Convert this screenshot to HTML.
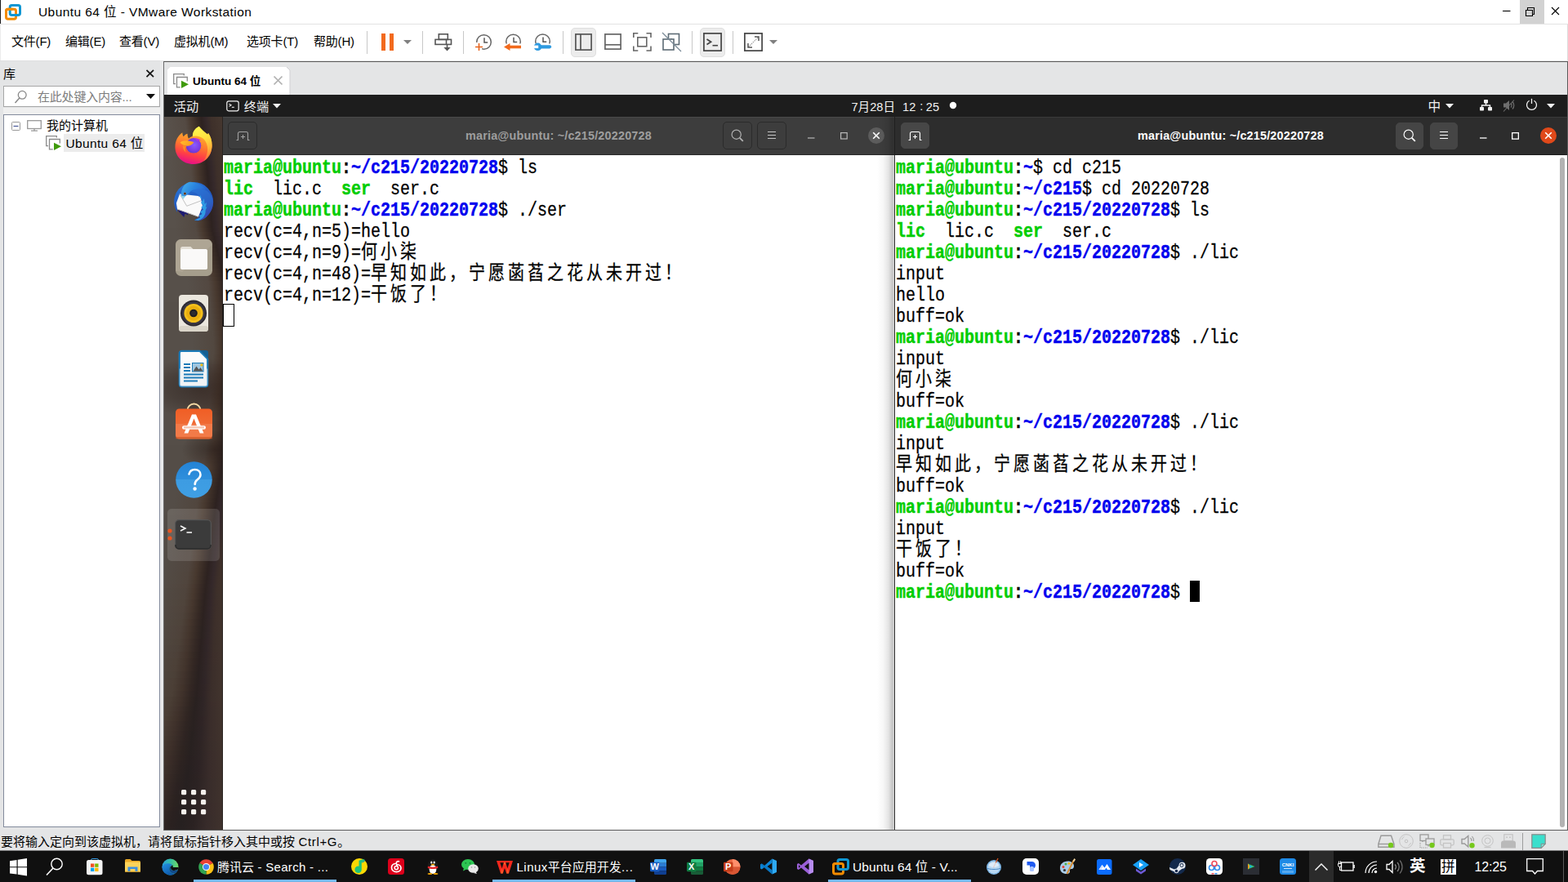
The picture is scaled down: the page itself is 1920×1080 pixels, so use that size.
<!DOCTYPE html>
<html lang="zh"><head><meta charset="utf-8"><title>Ubuntu 64 - VMware Workstation</title><style>
*{box-sizing:border-box}
html,body{margin:0;padding:0}
body{width:1920px;height:1080px;overflow:hidden;background:#fff;position:relative;font-family:"Liberation Sans","Noto Sans CJK SC",sans-serif;color:#000}
body div,body>svg,.abs{position:absolute}
.t{white-space:nowrap}
.m{font-family:"Liberation Mono",monospace}
svg{overflow:visible}

.term{font:20px/22.2222px "Liberation Mono","Noto Sans CJK SC",monospace;white-space:pre;color:#000}
.term p{margin:0;transform:scaleY(1.17);transform-origin:0 0;height:22.2222px;position:absolute;left:0}
.term{-webkit-text-stroke:0.22px currentColor}.term b{-webkit-text-stroke:0.4px currentColor}
.term b.g{color:#00cd00}.term b.b{color:#0000ee}
.k{font-family:"Liberation Mono","Noto Sans CJK SC",monospace;letter-spacing:4px}
</style></head><body>
<div style="left:0px;top:0px;width:1920px;height:29px;background:#fff"></div>
<div style="left:0px;top:0px;width:1px;height:29px;background:#1a1a1a"></div>
<div style="left:0px;top:29px;width:1920px;height:1px;background:#e3e3e3"></div>
<svg style="left:5px;top:4px;" width="22" height="22" viewBox="0 0 22 22"><rect x="2.5" y="7.2" width="12" height="12" rx="2.200" fill="none" stroke="#f38b00" stroke-width="3"/><rect x="7.2" y="2.5" width="12.300" height="12" rx="2.200" fill="none" stroke="#0f96d2" stroke-width="3"/><path d="M2.500 13V9.400A2.200 2.200 0 0 1 4.700 7.200H10.800" fill="none" stroke="#f38b00" stroke-width="3"/></svg>
<div class="t" style="left:47px;top:3.85px;font-size:15.5px;line-height:1.4em;letter-spacing:0.42px">Ubuntu 64 位 - VMware Workstation</div>
<div style="left:1861px;top:0px;width:30px;height:29px;background:#d2d2d2"></div>
<svg style="left:1836px;top:4px;" width="80" height="22" viewBox="0 0 80 22"><path d="M4 9.500h9.500" stroke="#000" stroke-width="1.100" fill="none"/><path d="M34.500 5.500h8v8h-8z" fill="none" stroke="#000" stroke-width="1.100"/><path d="M32.500 8.500h8v7h-8z" fill="#d2d2d2" stroke="#000" stroke-width="1.100"/><path d="M64 5l9 9M73 5l-9 9" stroke="#000" stroke-width="1.100" fill="none"/></svg>
<div style="left:0px;top:30px;width:1920px;height:44px;background:#fff"></div>
<div style="left:0px;top:30px;width:1px;height:44px;background:#ececec"></div>
<div style="left:1919px;top:30px;width:1px;height:44px;background:#dcdcdc"></div>
<div class="t" style="left:14px;top:40.20px;font-size:15px;line-height:1.4em;letter-spacing:-0.2px">文件(F)</div>
<div class="t" style="left:80px;top:40.20px;font-size:15px;line-height:1.4em;letter-spacing:-0.2px">编辑(E)</div>
<div class="t" style="left:146px;top:40.20px;font-size:15px;line-height:1.4em;letter-spacing:-0.2px">查看(V)</div>
<div class="t" style="left:213px;top:40.20px;font-size:15px;line-height:1.4em;letter-spacing:-0.2px">虚拟机(M)</div>
<div class="t" style="left:302px;top:40.20px;font-size:15px;line-height:1.4em;letter-spacing:-0.2px">选项卡(T)</div>
<div class="t" style="left:384px;top:40.20px;font-size:15px;line-height:1.4em;letter-spacing:-0.2px">帮助(H)</div>
<div style="left:466.5px;top:41px;width:5.3px;height:21px;background:#f26a1d"></div>
<div style="left:477px;top:41px;width:5.3px;height:21px;background:#f26a1d"></div>
<div style="left:449px;top:38px;width:1px;height:28px;background:#c8c8c8"></div>
<svg style="left:494px;top:49.3px;" width="10" height="5" viewBox="0 0 10 5"><path d="M0 0h10l-5 5z" fill="#808080"/></svg>
<div style="left:517px;top:38px;width:1px;height:28px;background:#c8c8c8"></div>
<svg style="left:531px;top:40px;" width="24" height="24" viewBox="0 0 24 24"><g fill="none" stroke="#555" stroke-width="1.600"><rect x="6.3" y="1.8" width="11" height="6.600"/><rect x="2" y="8.4" width="19.500" height="6"/><path d="M15.500 8.400v6"/><path d="M16.500 14.500v6"/></g><path d="M12.300 18h8.400l-4.200 4.400z" fill="#555"/></svg>
<div style="left:567px;top:38px;width:1px;height:28px;background:#c8c8c8"></div>
<svg style="left:581px;top:40px;" width="24" height="24" viewBox="0 0 24 24"><circle cx="11.500" cy="11.500" r="8.800" fill="none" stroke="#666" stroke-width="1.500"/><path d="M12 6.300v5.700h4.200" fill="none" stroke="#555" stroke-width="1.500"/><rect x="0" y="12" width="9" height="12" fill="#fff"/><path d="M1 17.500h9M5.500 13v9" stroke="#e8651f" stroke-width="1.600" fill="none"/></svg>
<svg style="left:616px;top:40px;" width="24" height="24" viewBox="0 0 24 24"><circle cx="12.500" cy="11" r="8.800" fill="none" stroke="#666" stroke-width="1.500"/><path d="M13 5.800v5.700h4.200" fill="none" stroke="#555" stroke-width="1.500"/><rect x="0" y="13.5" width="24" height="10" fill="#fff"/><path d="M7 17.500h15" stroke="#f26a1d" stroke-width="3.600" fill="none"/><path d="M1 17.500l7.500-4.600v9.200z" fill="#f26a1d"/></svg>
<svg style="left:652px;top:40px;" width="24" height="24" viewBox="0 0 24 24"><circle cx="12.500" cy="10.800" r="8.800" fill="none" stroke="#666" stroke-width="1.500"/><path d="M13 5.600v5.700h4.200" fill="none" stroke="#555" stroke-width="1.500"/><rect x="0" y="13.5" width="24" height="10" fill="#fff"/><path d="M10.500 17.300h10.500" stroke="#2e9ae0" stroke-width="4.200" stroke-linecap="round" fill="none"/><circle cx="6.500" cy="17.300" r="4.800" fill="#2e9ae0"/><rect x="0" y="15.6" width="7.200" height="3.500" fill="#fff"/></svg>
<div style="left:689px;top:38px;width:1px;height:28px;background:#c8c8c8"></div>
<div style="left:699px;top:34px;width:31px;height:36px;background:#ececec;border:1px solid #dedede;border-radius:5px"></div>
<svg style="left:703px;top:40px;" width="24" height="24" viewBox="0 0 24 24"><g fill="none" stroke="#555" stroke-width="1.700"><rect x="1.9" y="1.9" width="19.200" height="19.200"/><path d="M8 2v19"/></g></svg>
<svg style="left:739px;top:40px;" width="24" height="24" viewBox="0 0 24 24"><g fill="none" stroke="#666" stroke-width="1.700"><rect x="1.9" y="1.9" width="19.200" height="18.200"/><path d="M2 14.800h19"/></g></svg>
<svg style="left:774px;top:39px;" width="25" height="25" viewBox="0 0 25 25"><g fill="none" stroke="#666" stroke-width="1.600"><rect x="6.8" y="6.8" width="11" height="11"/><path d="M1.800 7v-5.200h5.500M17.500 1.800h5.500v5.200M23 17.500v5.500h-5.500M7.300 23h-5.500v-5.500"/></g></svg>
<svg style="left:810px;top:39px;" width="25" height="25" viewBox="0 0 25 25"><g fill="none" stroke-width="1.600"><rect x="8.5" y="2.5" width="13" height="13" stroke="#5d6b75"/><rect x="2" y="9" width="13" height="13" stroke="#5d6b75" fill="#fff"/><path d="M12 9v-1" stroke="#5d6b75"/><path d="M1 1l23 23" stroke="#7a8a96" stroke-width="1.300"/></g></svg>
<div style="left:847px;top:38px;width:1px;height:28px;background:#c8c8c8"></div>
<div style="left:857px;top:34px;width:31px;height:36px;background:#ececec;border:1px solid #dedede;border-radius:5px"></div>
<svg style="left:860px;top:39px;" width="25" height="25" viewBox="0 0 25 25"><rect x="1.9" y="1.9" width="21.200" height="21.200" fill="#ededed" stroke="#444" stroke-width="1.700"/><path d="M5.500 9l5 3.200-5 3.200" fill="none" stroke="#444" stroke-width="1.800"/><path d="M12.500 16.700h6.500" stroke="#444" stroke-width="1.600"/></svg>
<div style="left:897px;top:38px;width:1px;height:28px;background:#c8c8c8"></div>
<svg style="left:910px;top:39px;" width="25" height="25" viewBox="0 0 25 25"><rect x="1.9" y="1.9" width="21.200" height="21.200" fill="none" stroke="#444" stroke-width="1.700"/><path d="M6.500 18.500l12-12" stroke="#999" stroke-width="1.200" stroke-dasharray="1.500 1"/><path d="M14 6h5v5M11 19h-5v-5" fill="none" stroke="#555" stroke-width="1.500"/></svg>
<svg style="left:942px;top:49.3px;" width="10" height="5" viewBox="0 0 10 5"><path d="M0 0h10l-5 5z" fill="#808080"/></svg>
<div style="left:0px;top:74px;width:1920px;height:943px;background:#e4e5e6"></div>
<div style="left:0px;top:74px;width:200px;height:1px;background:#dfdfe0"></div>
<div style="left:196px;top:74px;width:4px;height:943px;background:#e8e9ea"></div>
<div class="t" style="left:4px;top:79.70px;font-size:15px;line-height:1.4em;">库</div>
<svg style="left:178px;top:84px;" width="12" height="12" viewBox="0 0 12 12"><path d="M1.500 1.800l8.500 8.400M10 1.800l-8.500 8.400" stroke="#111" stroke-width="1.700" fill="none"/></svg>
<div style="left:4px;top:105px;width:192px;height:26px;background:#fff;border:1px solid #a6a6a6"></div>
<svg style="left:16px;top:109px;" width="20" height="20" viewBox="0 0 20 20"><circle cx="11.200" cy="7.300" r="4.900" fill="none" stroke="#888" stroke-width="1.300"/><path d="M7.800 11l-5.300 6" stroke="#888" stroke-width="1.500"/></svg>
<div class="t" style="left:46px;top:107.70px;font-size:15px;line-height:1.4em;color:#7d7d7d;letter-spacing:-0.2px">在此处键入内容...</div>
<svg style="left:179px;top:115px;" width="11" height="6" viewBox="0 0 11 6"><path d="M0 0h11l-5.500 6z" fill="#111"/></svg>
<div style="left:4px;top:132px;width:192px;height:8px;background:#efefef"></div>
<div style="left:4px;top:140px;width:192px;height:873px;background:#fff;border:1px solid #828a9c"></div>
<svg style="left:14px;top:149px;" width="11" height="11" viewBox="0 0 11 11"><rect x="0.5" y="0.5" width="10" height="10" rx="1" fill="#fafafa" stroke="#9a9a9a"/><path d="M2.500 5.500h6" stroke="#4a5a9a" stroke-width="1.200"/></svg>
<svg style="left:33px;top:147px;" width="18" height="14" viewBox="0 0 18 14"><rect x="0.7" y="0.7" width="16.600" height="9.800" fill="#fff" stroke="#999" stroke-width="1.300"/><path d="M9 10.500v2.500M5 13.200h8" stroke="#999" stroke-width="1.300"/></svg>
<div class="t" style="left:57px;top:142.70px;font-size:15px;line-height:1.4em;">我的计算机</div>
<svg style="left:56px;top:166px;" width="19" height="19" viewBox="0 0 19 19"><path d="M13.300 2.500v-1.800h-12.600v12h2.300" fill="none" stroke="#8a8a8a" stroke-width="1.300"/><path d="M17.300 9.500v-5h-12.800v12.300h4.300" fill="none" stroke="#8a8a8a" stroke-width="1.300"/><path d="M10 8.800l9 4.500-9 4.600z" fill="#3f9a0b"/></svg>
<div style="left:78px;top:164px;width:99px;height:22px;background:#ececec"></div>
<div class="t" style="left:80.5px;top:164.85px;font-size:15.5px;line-height:1.4em;letter-spacing:0.35px">Ubuntu 64 位</div>
<div style="left:200px;top:75px;width:1720px;height:1px;background:#5a5a5a"></div>
<div style="left:200px;top:75px;width:1px;height:942px;background:#6c6c6c"></div>
<div style="left:1919px;top:75px;width:1px;height:942px;background:#5a5a5a"></div>
<div style="left:201px;top:1016px;width:1719px;height:1px;background:#5a5a5a"></div>
<svg style="left:205px;top:82px;" width="150" height="34" viewBox="0 0 150 34"><path d="M0 34V3.500L3.500 0H146l4 4v30z" fill="#fff"/><path d="M146 0l4 4v30" fill="none" stroke="#d0d0d3" stroke-width="1"/></svg>
<svg style="left:212px;top:90px;" width="19" height="19" viewBox="0 0 19 19"><path d="M13.300 2.500v-1.800h-12.600v12h2.300" fill="none" stroke="#8a8a8a" stroke-width="1.300"/><path d="M17.300 9.500v-5h-12.800v12.300h4.300" fill="none" stroke="#8a8a8a" stroke-width="1.300"/><path d="M10 8.800l9 4.500-9 4.600z" fill="#3f9a0b"/></svg>
<div class="t" style="left:236px;top:90.75px;font-size:13.5px;line-height:1.4em;font-weight:bold;letter-spacing:0px">Ubuntu 64 位</div>
<svg style="left:334px;top:92px;" width="13" height="13" viewBox="0 0 13 13"><path d="M1.500 1.500l10 10M11.500 1.500l-10 10" stroke="#b0b0b0" stroke-width="1.700" fill="none"/></svg>
<div style="left:201px;top:116px;width:1718px;height:27px;background:#1d1d1d"></div>
<div class="t" style="left:212.7px;top:120.46px;font-size:15.2px;line-height:1.4em;color:#f2f2f2">活动</div>
<svg style="left:277px;top:122.5px;" width="16" height="14" viewBox="0 0 16 14"><rect x="0.8" y="0.8" width="14.400" height="12" rx="2.200" fill="none" stroke="#f2f2f2" stroke-width="1.200"/><path d="M3.500 4.200l2.600 1.600-2.600 1.600" fill="none" stroke="#f2f2f2" stroke-width="1.100"/><path d="M6.800 8.300h3" stroke="#f2f2f2" stroke-width="1.100"/></svg>
<div class="t" style="left:298.7px;top:120.46px;font-size:15.2px;line-height:1.4em;color:#f2f2f2">终端</div>
<svg style="left:334px;top:127px;" width="10" height="5.5" viewBox="0 0 10 5.5"><path d="M0 0h10l-5 5.500z" fill="#f2f2f2"/></svg>
<div class="t" style="left:1042.5px;top:121.28px;font-size:14.6px;line-height:1.4em;color:#f2f2f2">7月28日<span style="margin-left:9px">12</span><span style="margin:0 3.5px 0 5px;position:relative;top:-1px">:</span>25</div>
<svg style="left:1162px;top:124px;" width="10" height="10" viewBox="0 0 10 10"><circle cx="5" cy="5" r="4.200" fill="#fff"/></svg>
<div class="t" style="left:1748.6px;top:120.38px;font-size:15.6px;line-height:1.4em;color:#f2f2f2">中</div>
<svg style="left:1770px;top:127px;" width="10" height="5.5" viewBox="0 0 10 5.5"><path d="M0 0h10l-5 5.500z" fill="#f2f2f2"/></svg>
<svg style="left:1812px;top:122px;" width="15" height="14" viewBox="0 0 15 14"><g fill="#f2f2f2"><rect x="5" y="0" width="5" height="4.600" rx="0.800"/><rect x="0" y="9" width="5" height="4.600" rx="0.800"/><rect x="10" y="9" width="5" height="4.600" rx="0.800"/></g><path d="M7.500 4v3M2.500 9.500v-2.500h10v2.500" fill="none" stroke="#f2f2f2" stroke-width="1.400"/></svg>
<svg style="left:1840px;top:121px;" width="16" height="16" viewBox="0 0 16 16"><path d="M1 5.500h3l4-3.500v12l-4-3.500h-3z" fill="#6e6e6e"/><path d="M10 5.500a3.500 3.500 0 0 1 0 5M12 3.500a6.500 6.500 0 0 1 0 9" fill="none" stroke="#6e6e6e" stroke-width="1.200"/><path d="M1 15.500l13-14" stroke="#6e6e6e" stroke-width="1.100"/></svg>
<svg style="left:1868px;top:120.3px;" width="15" height="15" viewBox="0 0 15 15"><path d="M4.600 3.200a6 6 0 1 0 5.800 0" fill="none" stroke="#f2f2f2" stroke-width="1.300"/><path d="M7.500 0.800v6.200" stroke="#f2f2f2" stroke-width="1.300"/></svg>
<svg style="left:1894px;top:127px;" width="10" height="5.5" viewBox="0 0 10 5.5"><path d="M0 0h10l-5 5.500z" fill="#f2f2f2"/></svg>
<div style="left:201px;top:143px;width:72px;height:5px;background:linear-gradient(90deg,#59524c 0.3px,#544a43 25.3px,#48392f 33.3px,#382b25 40.3px,#2d2220 45.3px,#34282a 51.3px,#3e302a 57.3px,#45372f 70.3px)"></div>
<div style="left:201px;top:148px;width:72px;height:5px;background:linear-gradient(90deg,#59524c 1.0px,#544a43 26.0px,#48392f 34.0px,#382b25 41.0px,#2d2220 46.0px,#34282a 52.0px,#3e302a 58.0px,#45372f 71.0px)"></div>
<div style="left:201px;top:153px;width:72px;height:5px;background:linear-gradient(90deg,#59524c 1.6px,#544a43 26.6px,#48392f 34.6px,#382b25 41.6px,#2d2220 46.6px,#34282a 52.6px,#3e302a 58.6px,#45372f 71.6px)"></div>
<div style="left:201px;top:158px;width:72px;height:6px;background:linear-gradient(90deg,#59524c 2.2px,#544a43 27.2px,#48392f 35.2px,#382b25 42.2px,#2d2220 47.2px,#34282a 53.2px,#3e302a 59.2px,#45372f 72.2px)"></div>
<div style="left:201px;top:164px;width:72px;height:5px;background:linear-gradient(90deg,#59524c 2.9px,#544a43 27.9px,#48392f 35.9px,#382b25 42.9px,#2d2220 47.9px,#34282a 53.9px,#3e302a 59.9px,#45372f 72.9px)"></div>
<div style="left:201px;top:169px;width:72px;height:6px;background:linear-gradient(90deg,#59524c 3.4px,#544a43 28.4px,#48392f 36.4px,#382b25 43.4px,#2d2220 48.4px,#34282a 54.4px,#3e302a 60.4px,#45372f 73.4px)"></div>
<div style="left:201px;top:175px;width:72px;height:5px;background:linear-gradient(90deg,#59524c 4.2px,#544a43 29.2px,#48392f 37.2px,#382b25 44.2px,#2d2220 49.2px,#34282a 55.2px,#3e302a 61.2px,#45372f 74.2px)"></div>
<div style="left:201px;top:180px;width:72px;height:6px;background:linear-gradient(90deg,#59524c 4.7px,#544a43 29.7px,#48392f 37.7px,#382b25 44.7px,#2d2220 49.7px,#34282a 55.7px,#3e302a 61.7px,#45372f 74.7px)"></div>
<div style="left:201px;top:186px;width:72px;height:5px;background:linear-gradient(90deg,#59524c 5.4px,#544a43 30.4px,#48392f 38.4px,#382b25 45.4px,#2d2220 50.4px,#34282a 56.4px,#3e302a 62.4px,#45372f 75.4px)"></div>
<div style="left:201px;top:191px;width:72px;height:6px;background:linear-gradient(90deg,#58514b 6.0px,#544a43 31.0px,#48392f 39.0px,#382b25 46.0px,#2d2220 51.0px,#34282a 57.0px,#3e302a 63.0px,#45372f 76.0px)"></div>
<div style="left:201px;top:197px;width:72px;height:5px;background:linear-gradient(90deg,#58514b 6.7px,#544a42 31.7px,#48392f 39.7px,#382b25 46.7px,#2d2220 51.7px,#34282a 57.7px,#3e302a 63.7px,#45372f 76.7px)"></div>
<div style="left:201px;top:202px;width:72px;height:6px;background:linear-gradient(90deg,#58514b 7.3px,#544942 32.3px,#48392f 40.3px,#382b25 47.3px,#2d2220 52.3px,#34282a 58.3px,#3e302a 64.3px,#45372f 77.3px)"></div>
<div style="left:201px;top:208px;width:72px;height:7px;background:linear-gradient(90deg,#58514b 8.0px,#544942 33.0px,#48392f 41.0px,#382b25 48.0px,#2d2220 53.0px,#34282a 59.0px,#3e302a 65.0px,#45372f 78.0px)"></div>
<div style="left:201px;top:215px;width:72px;height:8px;background:linear-gradient(90deg,#58514b 8.6px,#534942 33.6px,#48392f 41.6px,#382b25 48.6px,#2d2220 53.6px,#34282a 59.6px,#3e302a 65.6px,#45372f 78.6px)"></div>
<div style="left:201px;top:223px;width:72px;height:8px;background:linear-gradient(90deg,#58514b 9.2px,#534942 34.2px,#48392f 42.2px,#382b25 49.2px,#2d2220 54.2px,#34282a 60.2px,#3e302a 66.2px,#45372f 79.2px)"></div>
<div style="left:201px;top:231px;width:72px;height:8px;background:linear-gradient(90deg,#58514b 9.9px,#534942 34.9px,#48392f 42.9px,#382b25 49.9px,#2d2220 54.9px,#34282a 60.9px,#3e302a 66.9px,#45372f 79.9px)"></div>
<div style="left:201px;top:239px;width:72px;height:8px;background:linear-gradient(90deg,#58514b 10.6px,#534942 35.6px,#48392f 43.6px,#382b25 50.6px,#2d2220 55.6px,#34282a 61.6px,#3e302a 67.6px,#45372f 80.6px)"></div>
<div style="left:201px;top:247px;width:72px;height:8px;background:linear-gradient(90deg,#58514b 11.2px,#534942 36.2px,#48392f 44.2px,#382b25 51.2px,#2d2220 56.2px,#34282a 62.2px,#3e302a 68.2px,#45372f 81.2px)"></div>
<div style="left:201px;top:255px;width:72px;height:8px;background:linear-gradient(90deg,#58514b 11.9px,#534942 36.9px,#48392f 44.9px,#382b25 51.9px,#2d2220 56.9px,#34282a 62.9px,#3e302a 68.9px,#45372f 81.9px)"></div>
<div style="left:201px;top:263px;width:72px;height:8px;background:linear-gradient(90deg,#58514b 12.6px,#534942 37.6px,#48392f 45.6px,#382b25 52.6px,#2d2220 57.6px,#34282a 63.6px,#3e302a 69.6px,#45372f 82.6px)"></div>
<div style="left:201px;top:271px;width:72px;height:8px;background:linear-gradient(90deg,#58514b 13.2px,#534942 38.2px,#48392f 46.2px,#382b25 53.2px,#2d2220 58.2px,#34282a 64.2px,#3e302a 70.2px,#45372f 83.2px)"></div>
<div style="left:201px;top:279px;width:72px;height:5px;background:linear-gradient(90deg,#57504a 13.9px,#534942 38.9px,#48392f 46.9px,#382b25 53.9px,#2d2220 58.9px,#34282a 64.9px,#3e302a 70.9px,#45372f 83.9px)"></div>
<div style="left:201px;top:284px;width:72px;height:5px;background:linear-gradient(90deg,#57504a 14.9px,#534942 40.0px,#48392f 48.0px,#382b25 55.0px,#2d2220 60.0px,#34282a 66.0px,#3e302a 72.0px,#45372f 85.0px)"></div>
<div style="left:201px;top:289px;width:72px;height:5px;background:linear-gradient(90deg,#57504a 16.1px,#534942 41.2px,#48392f 49.2px,#382b25 56.2px,#2d2220 61.2px,#34282a 67.3px,#3e302a 73.3px,#45372f 86.4px)"></div>
<div style="left:201px;top:294px;width:72px;height:5px;background:linear-gradient(90deg,#57504a 17.2px,#534942 42.4px,#48392f 50.4px,#382b25 57.5px,#2d2220 62.5px,#34282a 68.5px,#3e302a 74.6px,#45372f 87.7px)"></div>
<div style="left:201px;top:299px;width:72px;height:5px;background:linear-gradient(90deg,#57504a 18.4px,#534941 43.6px,#48392f 51.6px,#382b25 58.7px,#2d2220 63.8px,#34282a 69.8px,#3e302a 75.9px,#45372f 89.0px)"></div>
<div style="left:201px;top:304px;width:72px;height:5px;background:linear-gradient(90deg,#57504a 19.5px,#534941 44.8px,#48392f 52.9px,#382b25 59.9px,#2d2220 65.0px,#34282a 71.1px,#3e302a 77.1px,#45372f 90.3px)"></div>
<div style="left:201px;top:309px;width:72px;height:5px;background:linear-gradient(90deg,#57504a 20.7px,#534941 46.0px,#48392f 54.1px,#382b25 61.2px,#2d2220 66.2px,#34282a 72.3px,#3e302a 78.4px,#45372f 91.6px)"></div>
<div style="left:201px;top:314px;width:72px;height:5px;background:linear-gradient(90deg,#57504a 21.8px,#534941 47.2px,#48392f 55.3px,#382b25 62.4px,#2d2220 67.5px,#34282a 73.6px,#3e302a 79.7px,#45372f 92.9px)"></div>
<div style="left:201px;top:319px;width:72px;height:5px;background:linear-gradient(90deg,#57504a 23.0px,#534941 48.4px,#48392f 56.5px,#382b25 63.7px,#2d2220 68.8px,#34282a 74.9px,#3e302a 81.0px,#45372f 94.2px)"></div>
<div style="left:201px;top:324px;width:72px;height:5px;background:linear-gradient(90deg,#57504a 24.1px,#534841 49.6px,#48392f 57.8px,#382b25 64.9px,#2d2220 70.0px,#34282a 76.1px,#3e302a 82.2px,#45372f 95.5px)"></div>
<div style="left:201px;top:329px;width:72px;height:5px;background:linear-gradient(90deg,#57504a 25.3px,#534841 50.8px,#48392f 59.0px,#382b25 66.1px,#2d2220 71.2px,#34282a 77.4px,#3e302a 83.5px,#45372f 96.8px)"></div>
<div style="left:201px;top:334px;width:72px;height:5px;background:linear-gradient(90deg,#57504a 26.4px,#534841 52.0px,#48392f 60.2px,#382b25 67.4px,#2d2220 72.5px,#34282a 78.6px,#3e302a 84.8px,#45372f 98.1px)"></div>
<div style="left:201px;top:339px;width:72px;height:5px;background:linear-gradient(90deg,#57504a 27.6px,#534841 53.2px,#48392f 61.4px,#382b25 68.6px,#2d2220 73.8px,#34282a 79.9px,#3e302a 86.1px,#45372f 99.4px)"></div>
<div style="left:201px;top:344px;width:72px;height:5px;background:linear-gradient(90deg,#57504a 28.7px,#534841 54.4px,#48392f 62.7px,#382b25 69.9px,#2d2220 75.0px,#34282a 81.2px,#3e302a 87.3px,#45372f 100.7px)"></div>
<div style="left:201px;top:349px;width:72px;height:7px;background:linear-gradient(90deg,#57504a 29.1px,#534841 54.9px,#48392f 63.1px,#382b25 70.3px,#2d2220 75.5px,#34282a 81.7px,#3e302a 87.8px,#45372f 101.2px)"></div>
<div style="left:201px;top:356px;width:72px;height:7px;background:linear-gradient(90deg,#57504a 29.6px,#524841 55.5px,#48392f 63.7px,#382b25 71.0px,#2d2220 76.1px,#34282a 82.3px,#3e302a 88.5px,#45372f 102.0px)"></div>
<div style="left:201px;top:363px;width:72px;height:7px;background:linear-gradient(90deg,#57504a 30.1px,#524841 56.0px,#48392f 64.3px,#382b25 71.6px,#2d2220 76.8px,#34282a 83.0px,#3e302a 89.2px,#45372f 102.7px)"></div>
<div style="left:201px;top:370px;width:72px;height:7px;background:linear-gradient(90deg,#564f49 30.6px,#524841 56.6px,#48392f 65.0px,#382b25 72.3px,#2d2220 77.5px,#34282a 83.7px,#3e302a 89.9px,#45372f 103.5px)"></div>
<div style="left:201px;top:377px;width:72px;height:7px;background:linear-gradient(90deg,#564f49 31.2px,#524841 57.2px,#48392f 65.6px,#382b25 72.9px,#2d2220 78.1px,#34282a 84.4px,#3e302a 90.6px,#45372f 104.2px)"></div>
<div style="left:201px;top:384px;width:72px;height:7px;background:linear-gradient(90deg,#564f49 31.7px,#524841 57.8px,#48392f 66.2px,#382b25 73.5px,#2d2220 78.8px,#34282a 85.1px,#3e302a 91.3px,#45372f 105.0px)"></div>
<div style="left:201px;top:391px;width:72px;height:7px;background:linear-gradient(90deg,#564f49 32.2px,#524841 58.4px,#48392f 66.8px,#382b25 74.2px,#2d2220 79.4px,#34282a 85.7px,#3e302a 92.0px,#45372f 105.7px)"></div>
<div style="left:201px;top:398px;width:72px;height:7px;background:linear-gradient(90deg,#564f49 32.7px,#524840 59.0px,#48392f 67.5px,#382b25 74.8px,#2d2220 80.1px,#34282a 86.4px,#3e302a 92.7px,#45372f 106.4px)"></div>
<div style="left:201px;top:405px;width:72px;height:7px;background:linear-gradient(90deg,#564f49 33.2px,#524840 59.6px,#48392f 68.1px,#382b25 75.5px,#2d2220 80.8px,#34282a 87.1px,#3e302a 93.4px,#45372f 107.2px)"></div>
<div style="left:201px;top:412px;width:72px;height:10px;background:linear-gradient(90deg,#564f49 33.8px,#524840 60.2px,#48392f 68.7px,#382b25 76.1px,#2d2220 81.4px,#34282a 87.8px,#3e302a 94.1px,#45372f 107.9px)"></div>
<div style="left:201px;top:422px;width:72px;height:12px;background:linear-gradient(90deg,#564f49 33.9px,#524840 60.5px,#48392f 69.0px,#382b25 76.4px,#2d2220 81.8px,#34282a 88.2px,#3e302a 94.5px,#45372f 108.4px)"></div>
<div style="left:201px;top:434px;width:72px;height:12px;background:linear-gradient(90deg,#564f49 32.9px,#524840 59.7px,#48392f 68.2px,#382b25 75.7px,#2d2220 81.1px,#34282a 87.5px,#3e302a 93.9px,#45372f 107.8px)"></div>
<div style="left:201px;top:446px;width:72px;height:11px;background:linear-gradient(90deg,#564f49 32.0px,#524740 58.9px,#48392f 67.5px,#382b25 75.0px,#2d2220 80.4px,#34282a 86.8px,#3e302a 93.3px,#45372f 107.2px)"></div>
<div style="left:201px;top:457px;width:72px;height:12px;background:linear-gradient(90deg,#554e48 31.1px,#524740 58.1px,#48392f 66.8px,#382b25 74.3px,#2d2220 79.7px,#34282a 86.2px,#3e302a 92.7px,#45372f 106.7px)"></div>
<div style="left:201px;top:469px;width:72px;height:12px;background:linear-gradient(90deg,#554e48 30.2px,#524740 57.3px,#48392f 66.0px,#382b25 73.6px,#2d2220 79.0px,#34282a 85.5px,#3e302a 92.0px,#45372f 106.2px)"></div>
<div style="left:201px;top:481px;width:72px;height:12px;background:linear-gradient(90deg,#554e48 29.3px,#524740 56.5px,#48392f 65.2px,#382b25 72.9px,#2d2220 78.3px,#34282a 84.9px,#3e302a 91.4px,#45372f 105.6px)"></div>
<div style="left:201px;top:493px;width:72px;height:12px;background:linear-gradient(90deg,#554e48 28.3px,#524740 55.7px,#48392f 64.5px,#382b25 72.1px,#2d2220 77.6px,#34282a 84.2px,#3e302a 90.8px,#45372f 105.0px)"></div>
<div style="left:201px;top:505px;width:72px;height:11px;background:linear-gradient(90deg,#554e48 27.4px,#51473f 54.9px,#48392f 63.7px,#382b25 71.4px,#2d2220 76.9px,#34282a 83.5px,#3e302a 90.1px,#45372f 104.5px)"></div>
<div style="left:201px;top:516px;width:72px;height:12px;background:linear-gradient(90deg,#554e48 26.5px,#51473f 54.2px,#48392f 63.0px,#382b25 70.8px,#2d2220 76.3px,#34282a 82.9px,#3e302a 89.6px,#45372f 103.9px)"></div>
<div style="left:201px;top:528px;width:72px;height:12px;background:linear-gradient(90deg,#554e48 25.6px,#51473f 53.3px,#48392f 62.2px,#382b25 70.0px,#2d2220 75.6px,#34282a 82.3px,#3e302a 88.9px,#45372f 103.4px)"></div>
<div style="left:201px;top:540px;width:72px;height:5px;background:linear-gradient(90deg,#554e48 24.4px,#51473f 52.3px,#48392f 61.3px,#382b25 69.1px,#2d2220 74.7px,#34282a 81.4px,#3e302a 88.1px,#45372f 102.6px)"></div>
<div style="left:201px;top:545px;width:72px;height:5px;background:linear-gradient(90deg,#544d47 23.6px,#51473f 51.5px,#48392f 60.5px,#382b25 68.3px,#2d2220 73.9px,#34282a 80.6px,#3e302a 87.4px,#45372f 101.9px)"></div>
<div style="left:201px;top:550px;width:72px;height:5px;background:linear-gradient(90deg,#544d47 22.7px,#51473f 50.7px,#48392f 59.7px,#382b25 67.5px,#2d2220 73.2px,#34282a 79.9px,#3e302a 86.6px,#45372f 101.2px)"></div>
<div style="left:201px;top:555px;width:72px;height:5px;background:linear-gradient(90deg,#544d47 21.8px,#51473f 49.9px,#48392f 58.9px,#382b25 66.8px,#2d2220 72.4px,#34282a 79.1px,#3e302a 85.9px,#45372f 100.5px)"></div>
<div style="left:201px;top:560px;width:72px;height:5px;background:linear-gradient(90deg,#544d47 20.9px,#51463f 49.1px,#48392f 58.1px,#382b25 66.0px,#2d2220 71.6px,#34282a 78.4px,#3e302a 85.1px,#45372f 99.8px)"></div>
<div style="left:201px;top:565px;width:72px;height:5px;background:linear-gradient(90deg,#544d47 20.1px,#51463f 48.3px,#48392f 57.3px,#382b25 65.2px,#2d2220 70.8px,#34282a 77.6px,#3e302a 84.4px,#45372f 99.1px)"></div>
<div style="left:201px;top:570px;width:72px;height:5px;background:linear-gradient(90deg,#544d47 19.2px,#51463f 47.5px,#48392f 56.5px,#382b25 64.4px,#2d2220 70.1px,#34282a 76.9px,#3e302a 83.6px,#45372f 98.3px)"></div>
<div style="left:201px;top:575px;width:72px;height:5px;background:linear-gradient(90deg,#544d47 18.3px,#51463f 46.7px,#48392f 55.7px,#382b25 63.6px,#2d2220 69.3px,#34282a 76.1px,#3e302a 82.9px,#45372f 97.6px)"></div>
<div style="left:201px;top:580px;width:72px;height:5px;background:linear-gradient(90deg,#544d47 17.5px,#51463f 45.8px,#48392f 54.9px,#382b25 62.9px,#2d2220 68.5px,#34282a 75.3px,#3e302a 82.2px,#45372f 96.9px)"></div>
<div style="left:201px;top:585px;width:72px;height:5px;background:linear-gradient(90deg,#544d47 16.6px,#51463f 45.0px,#48392f 54.1px,#382b25 62.1px,#2d2220 67.8px,#34282a 74.6px,#3e302a 81.4px,#45372f 96.2px)"></div>
<div style="left:201px;top:590px;width:72px;height:5px;background:linear-gradient(90deg,#544d47 15.7px,#51463f 44.2px,#48392f 53.3px,#382b25 61.3px,#2d2220 67.0px,#34282a 73.8px,#3e302a 80.7px,#45372f 95.5px)"></div>
<div style="left:201px;top:595px;width:72px;height:5px;background:linear-gradient(90deg,#544d47 14.8px,#51463f 43.4px,#48392f 52.5px,#382b25 60.5px,#2d2220 66.2px,#34282a 73.1px,#3e302a 79.9px,#45372f 94.8px)"></div>
<div style="left:201px;top:600px;width:72px;height:5px;background:linear-gradient(90deg,#544d47 14.0px,#51463e 42.6px,#48392f 51.7px,#382b25 59.7px,#2d2220 65.5px,#34282a 72.3px,#3e302a 79.2px,#45372f 94.1px)"></div>
<div style="left:201px;top:605px;width:72px;height:5px;background:linear-gradient(90deg,#544d47 13.1px,#51463e 41.8px,#48392f 50.9px,#382b25 59.0px,#2d2220 64.7px,#34282a 71.6px,#3e302a 78.4px,#45372f 93.4px)"></div>
<div style="left:201px;top:610px;width:72px;height:5px;background:linear-gradient(90deg,#544d47 12.2px,#51463e 41.0px,#48392f 50.1px,#382b25 58.2px,#2d2220 63.9px,#34282a 70.8px,#3e302a 77.7px,#45372f 92.6px)"></div>
<div style="left:201px;top:615px;width:72px;height:5px;background:linear-gradient(90deg,#544d47 11.4px,#51463e 40.1px,#48392f 49.3px,#382b25 57.4px,#2d2220 63.2px,#34282a 70.1px,#3e302a 77.0px,#45372f 91.9px)"></div>
<div style="left:201px;top:620px;width:72px;height:5px;background:linear-gradient(90deg,#544d47 10.6px,#51463e 39.5px,#48392f 48.7px,#382b25 56.8px,#2d2220 62.5px,#34282a 69.4px,#3e302a 76.4px,#45372f 91.3px)"></div>
<div style="left:201px;top:625px;width:72px;height:5px;background:linear-gradient(90deg,#544d47 9.9px,#51463e 38.8px,#48392f 48.1px,#382b25 56.1px,#2d2220 61.9px,#34282a 68.8px,#3e302a 75.8px,#45372f 90.8px)"></div>
<div style="left:201px;top:630px;width:72px;height:5px;background:linear-gradient(90deg,#534c46 9.2px,#51463e 38.2px,#48392f 47.4px,#382b25 55.5px,#2d2220 61.3px,#34282a 68.3px,#3e302a 75.2px,#45372f 90.3px)"></div>
<div style="left:201px;top:635px;width:72px;height:5px;background:linear-gradient(90deg,#534c46 8.5px,#51463e 37.5px,#48392f 46.8px,#382b25 54.9px,#2d2220 60.7px,#34282a 67.7px,#3e302a 74.6px,#45372f 89.7px)"></div>
<div style="left:201px;top:640px;width:72px;height:5px;background:linear-gradient(90deg,#534c46 7.8px,#50463e 36.9px,#48392f 46.2px,#382b25 54.3px,#2d2220 60.1px,#34282a 67.1px,#3e302a 74.1px,#45372f 89.2px)"></div>
<div style="left:201px;top:645px;width:72px;height:5px;background:linear-gradient(90deg,#534c46 7.1px,#50463e 36.2px,#48392f 45.5px,#382b25 53.7px,#2d2220 59.5px,#34282a 66.5px,#3e302a 73.5px,#45372f 88.6px)"></div>
<div style="left:201px;top:650px;width:72px;height:5px;background:linear-gradient(90deg,#534c46 6.4px,#50463e 35.6px,#48392f 44.9px,#382b25 53.1px,#2d2220 58.9px,#34282a 65.9px,#3e302a 72.9px,#45372f 88.1px)"></div>
<div style="left:201px;top:655px;width:72px;height:5px;background:linear-gradient(90deg,#534c46 5.7px,#50463e 34.9px,#48392f 44.3px,#382b25 52.5px,#2d2220 58.3px,#34282a 65.3px,#3e302a 72.3px,#45372f 87.5px)"></div>
<div style="left:201px;top:660px;width:72px;height:5px;background:linear-gradient(90deg,#534c46 5.0px,#50463e 34.3px,#48392f 43.6px,#382b25 51.8px,#2d2220 57.7px,#34282a 64.7px,#3e302a 71.8px,#45372f 87.0px)"></div>
<div style="left:201px;top:665px;width:72px;height:5px;background:linear-gradient(90deg,#534c46 4.3px,#50463e 33.6px,#48392f 43.0px,#382b25 51.2px,#2d2220 57.1px,#34282a 64.1px,#3e302a 71.2px,#45372f 86.4px)"></div>
<div style="left:201px;top:670px;width:72px;height:5px;background:linear-gradient(90deg,#534c46 3.6px,#50463e 33.0px,#48392f 42.4px,#382b25 50.6px,#2d2220 56.5px,#34282a 63.6px,#3e302a 70.6px,#45372f 85.9px)"></div>
<div style="left:201px;top:675px;width:72px;height:5px;background:linear-gradient(90deg,#534c46 2.9px,#50453e 32.3px,#48392f 41.8px,#382b25 50.0px,#2d2220 55.9px,#34282a 63.0px,#3e302a 70.0px,#45372f 85.3px)"></div>
<div style="left:201px;top:680px;width:72px;height:5px;background:linear-gradient(90deg,#534c46 2.2px,#50453e 31.7px,#48392f 41.1px,#382b25 49.4px,#2d2220 55.3px,#34282a 62.4px,#3e302a 69.5px,#45372f 84.8px)"></div>
<div style="left:201px;top:685px;width:72px;height:5px;background:linear-gradient(90deg,#534c46 1.5px,#50453e 31.0px,#48392f 40.5px,#382b25 48.8px,#2d2220 54.7px,#34282a 61.8px,#3e302a 68.9px,#45372f 84.3px)"></div>
<div style="left:201px;top:690px;width:72px;height:5px;background:linear-gradient(90deg,#534c46 0.8px,#50453e 30.4px,#48392f 39.9px,#382b25 48.2px,#2d2220 54.1px,#34282a 61.2px,#3e302a 68.3px,#45372f 83.7px)"></div>
<div style="left:201px;top:695px;width:72px;height:5px;background:linear-gradient(90deg,#534c46 0.1px,#50453e 29.8px,#48392f 39.2px,#382b25 47.6px,#2d2220 53.5px,#34282a 60.6px,#3e302a 67.7px,#45372f 83.2px)"></div>
<div style="left:201px;top:700px;width:72px;height:5px;background:linear-gradient(90deg,#534c46 -0.6px,#50453d 29.1px,#48392f 38.6px,#382b25 46.9px,#2d2220 52.9px,#34282a 60.0px,#3e302a 67.2px,#45372f 82.6px)"></div>
<div style="left:201px;top:705px;width:72px;height:5px;background:linear-gradient(90deg,#534c46 -1.3px,#50453d 28.5px,#48392f 38.0px,#382b25 46.3px,#2d2220 52.3px,#34282a 59.4px,#3e302a 66.6px,#45372f 82.1px)"></div>
<div style="left:201px;top:710px;width:72px;height:5px;background:linear-gradient(90deg,#534c46 -2.0px,#50453d 27.8px,#47392f 37.4px,#382b25 45.7px,#2d2220 51.7px,#34282a 58.8px,#3e302a 66.0px,#45372f 81.5px)"></div>
<div style="left:201px;top:715px;width:72px;height:5px;background:linear-gradient(90deg,#534c46 -2.7px,#50443c 27.2px,#47382f 36.7px,#372a25 45.1px,#2d2220 51.1px,#34282a 58.3px,#3e302a 65.4px,#45372f 81.0px)"></div>
<div style="left:201px;top:720px;width:72px;height:6px;background:linear-gradient(90deg,#524b45 -3.4px,#4f443c 26.5px,#47382e 36.1px,#372a25 44.5px,#2d2220 50.5px,#332829 57.7px,#3e302a 64.9px,#45372f 80.4px)"></div>
<div style="left:201px;top:726px;width:72px;height:8px;background:linear-gradient(90deg,#524b45 -4.4px,#4f443c 25.7px,#47382e 35.4px,#372a25 43.8px,#2c2220 49.8px,#332729 57.1px,#3d302a 64.3px,#45372f 80.0px)"></div>
<div style="left:201px;top:734px;width:72px;height:8px;background:linear-gradient(90deg,#524b45 -5.9px,#4f443b 24.7px,#46372e 34.5px,#362a24 43.0px,#2c2220 49.2px,#332729 56.5px,#3d2f2a 63.8px,#45372f 79.8px)"></div>
<div style="left:201px;top:742px;width:72px;height:8px;background:linear-gradient(90deg,#524b45 -7.5px,#4f433b 23.6px,#46372e 33.6px,#362a24 42.3px,#2c2220 48.5px,#332729 55.9px,#3d2f2a 63.4px,#45372f 79.6px)"></div>
<div style="left:201px;top:750px;width:72px;height:8px;background:linear-gradient(90deg,#524b45 -9.0px,#4e433b 22.5px,#45372e 32.6px,#362924 41.5px,#2c2220 47.8px,#322729 55.4px,#3d2f2a 63.0px,#45372f 79.4px)"></div>
<div style="left:201px;top:758px;width:72px;height:8px;background:linear-gradient(90deg,#524b45 -10.6px,#4e433a 21.5px,#45362d 31.7px,#352924 40.7px,#2c2220 47.1px,#322728 54.8px,#3d2f2a 62.5px,#45372f 79.2px)"></div>
<div style="left:201px;top:766px;width:72px;height:8px;background:linear-gradient(90deg,#524b45 -12.1px,#4e423a 20.4px,#44362d 30.8px,#352924 39.9px,#2b2220 46.4px,#322728 54.3px,#3d2f2a 62.1px,#45372f 79.0px)"></div>
<div style="left:201px;top:774px;width:72px;height:8px;background:linear-gradient(90deg,#524b45 -13.7px,#4e423a 19.3px,#44362d 29.9px,#352924 39.2px,#2b2220 45.8px,#322728 53.7px,#3c2f2a 61.6px,#45372f 78.8px)"></div>
<div style="left:201px;top:782px;width:72px;height:8px;background:linear-gradient(90deg,#524b45 -15.2px,#4d4239 18.3px,#44352d 29.0px,#342824 38.4px,#2b2120 45.1px,#322628 53.1px,#3c2f2a 61.2px,#45372f 78.6px)"></div>
<div style="left:201px;top:790px;width:72px;height:8px;background:linear-gradient(90deg,#524b45 -16.8px,#4c4139 17.2px,#43352d 28.1px,#342824 37.6px,#2b2120 44.4px,#312628 52.6px,#3c2f2a 60.7px,#45372f 78.4px)"></div>
<div style="left:201px;top:798px;width:72px;height:8px;background:linear-gradient(90deg,#524b45 -18.3px,#4c4038 16.2px,#43342c 27.2px,#332823 36.8px,#2b2120 43.7px,#312627 52.0px,#3c2e2a 60.3px,#45372f 78.2px)"></div>
<div style="left:201px;top:806px;width:72px;height:8px;background:linear-gradient(90deg,#514a44 -19.9px,#4c4037 15.1px,#42342c 26.3px,#332723 36.1px,#2b2120 43.1px,#312627 51.4px,#3c2e2a 59.8px,#45372f 78.0px)"></div>
<div style="left:201px;top:814px;width:72px;height:8px;background:linear-gradient(90deg,#514a44 -21.4px,#4c4037 14.0px,#42342c 25.4px,#332723 35.3px,#2a2120 42.4px,#312627 50.9px,#3b2e2a 59.4px,#45372f 77.8px)"></div>
<div style="left:201px;top:822px;width:72px;height:8px;background:linear-gradient(90deg,#514a44 -23.0px,#4b4037 13.0px,#41332c 24.5px,#322723 34.5px,#2a2120 41.7px,#302627 50.3px,#3b2e2a 58.9px,#45372f 77.6px)"></div>
<div style="left:201px;top:830px;width:72px;height:8px;background:linear-gradient(90deg,#514a44 -24.5px,#4b3f36 11.9px,#41332c 23.5px,#322723 33.7px,#2a2120 41.0px,#302527 49.8px,#3b2e2a 58.5px,#45372f 77.4px)"></div>
<div style="left:201px;top:838px;width:72px;height:8px;background:linear-gradient(90deg,#514a44 -26.1px,#4b3f36 10.8px,#41332b 22.6px,#322623 33.0px,#2a2120 40.3px,#302526 49.2px,#3b2e2a 58.1px,#45372f 77.2px)"></div>
<div style="left:201px;top:846px;width:72px;height:7px;background:linear-gradient(90deg,#514a44 -27.6px,#4b3f36 9.8px,#40322b 21.7px,#312623 32.2px,#2a2120 39.7px,#302526 48.6px,#3b2e2a 57.6px,#45372f 77.0px)"></div>
<div style="left:201px;top:853px;width:72px;height:6px;background:linear-gradient(90deg,#514a44 -30.2px,#4a3e35 8.2px,#40322b 20.5px,#312622 31.3px,#292120 39.0px,#2f2526 48.2px,#3b2e2a 57.4px,#45372f 77.4px)"></div>
<div style="left:201px;top:859px;width:72px;height:6px;background:linear-gradient(90deg,#514a44 -32.8px,#4a3e35 6.7px,#40322b 19.3px,#312622 30.4px,#292120 38.3px,#2f2526 47.8px,#3b2d2a 57.3px,#45372f 77.8px)"></div>
<div style="left:201px;top:865px;width:72px;height:6px;background:linear-gradient(90deg,#514a44 -35.4px,#4a3e35 5.2px,#3f312b 18.2px,#302622 29.5px,#292120 37.6px,#2f2526 47.4px,#3a2d2a 57.1px,#45372f 78.2px)"></div>
<div style="left:201px;top:871px;width:72px;height:6px;background:linear-gradient(90deg,#514a44 -38.1px,#4a3e35 3.6px,#3f312a 17.0px,#302522 28.6px,#292120 37.0px,#2f2525 47.0px,#3a2d2a 57.0px,#45372f 78.7px)"></div>
<div style="left:201px;top:877px;width:72px;height:6px;background:linear-gradient(90deg,#514a44 -40.7px,#4a3e34 2.1px,#3f312a 15.8px,#302522 27.8px,#292120 36.3px,#2f2425 46.6px,#3a2d2a 56.9px,#45372f 79.1px)"></div>
<div style="left:201px;top:883px;width:72px;height:6px;background:linear-gradient(90deg,#514a44 -43.3px,#4a3d34 0.6px,#3e302a 14.6px,#2f2522 26.9px,#292120 35.7px,#2f2425 46.2px,#3a2d2a 56.7px,#45372f 79.6px)"></div>
<div style="left:201px;top:889px;width:72px;height:6px;background:linear-gradient(90deg,#514a44 -45.9px,#493d34 -1.0px,#3e302a 13.4px,#2f2522 26.0px,#292120 35.0px,#2e2425 45.8px,#3a2d2a 56.6px,#45372f 80.0px)"></div>
<div style="left:201px;top:895px;width:72px;height:6px;background:linear-gradient(90deg,#514a44 -48.6px,#493d34 -2.5px,#3e302a 12.2px,#2f2422 25.1px,#282120 34.4px,#2e2425 45.4px,#3a2d2a 56.5px,#45372f 80.4px)"></div>
<div style="left:201px;top:901px;width:72px;height:6px;background:linear-gradient(90deg,#514a44 -51.2px,#493d33 -4.0px,#3d302a 11.1px,#2f2422 24.3px,#282120 33.7px,#2e2425 45.0px,#3a2d2a 56.3px,#45372f 80.9px)"></div>
<div style="left:201px;top:907px;width:72px;height:6px;background:linear-gradient(90deg,#514a44 -53.8px,#493c33 -5.6px,#3d2f29 9.9px,#2e2422 23.4px,#282120 33.0px,#2e2424 44.6px,#392d2a 56.2px,#45372f 81.3px)"></div>
<div style="left:201px;top:913px;width:72px;height:6px;background:linear-gradient(90deg,#514a44 -56.4px,#493c33 -7.1px,#3d2f29 8.7px,#2e2421 22.5px,#282120 32.4px,#2e2424 44.2px,#392d2a 56.1px,#45372f 81.7px)"></div>
<div style="left:201px;top:919px;width:72px;height:6px;background:linear-gradient(90deg,#514a44 -59.1px,#483c33 -8.6px,#3c2f29 7.5px,#2e2421 21.6px,#282120 31.7px,#2d2424 43.8px,#392c2a 55.9px,#45372f 82.2px)"></div>
<div style="left:201px;top:925px;width:72px;height:6px;background:linear-gradient(90deg,#514a44 -61.7px,#483c32 -10.2px,#3c2e29 6.3px,#2e2421 20.8px,#282020 31.1px,#2d2424 43.4px,#392c2a 55.8px,#45372f 82.6px)"></div>
<div style="left:201px;top:931px;width:72px;height:6px;background:linear-gradient(90deg,#514a44 -64.3px,#483c32 -11.7px,#3c2e29 5.2px,#2d2321 19.9px,#282020 30.4px,#2d2324 43.1px,#392c2a 55.7px,#45372f 83.1px)"></div>
<div style="left:201px;top:937px;width:72px;height:6px;background:linear-gradient(90deg,#514a44 -66.9px,#483b32 -13.2px,#3b2e29 4.0px,#2d2321 19.0px,#272020 29.8px,#2d2324 42.7px,#392c2a 55.6px,#45372f 83.5px)"></div>
<div style="left:201px;top:943px;width:72px;height:5px;background:linear-gradient(90deg,#514a44 -69.6px,#483b31 -14.7px,#3b2e29 2.8px,#2d2321 18.1px,#272020 29.1px,#2d2324 42.3px,#392c2a 55.4px,#45372f 83.9px)"></div>
<div style="left:201px;top:948px;width:72px;height:5px;background:linear-gradient(90deg,#514a44 -71.5px,#483b31 -16.0px,#3b2d28 1.8px,#2c2321 17.4px,#272020 28.5px,#2d2323 41.8px,#392c2a 55.2px,#45372f 84.1px)"></div>
<div style="left:201px;top:953px;width:72px;height:5px;background:linear-gradient(90deg,#514a44 -73.5px,#473b31 -17.2px,#3b2d28 0.8px,#2c2321 16.6px,#272020 27.8px,#2c2323 41.4px,#382c2a 54.9px,#45372f 84.1px)"></div>
<div style="left:201px;top:958px;width:72px;height:5px;background:linear-gradient(90deg,#514a44 -75.4px,#473b31 -18.4px,#3a2d28 -0.2px,#2c2221 15.8px,#272020 27.2px,#2c2323 40.9px,#382c2a 54.6px,#45372f 84.2px)"></div>
<div style="left:201px;top:963px;width:72px;height:5px;background:linear-gradient(90deg,#514a44 -77.3px,#473a31 -19.6px,#3a2d28 -1.1px,#2c2221 15.0px,#272020 26.6px,#2c2323 40.4px,#382c2a 54.3px,#45372f 84.3px)"></div>
<div style="left:201px;top:968px;width:72px;height:5px;background:linear-gradient(90deg,#514a44 -79.3px,#473a30 -20.8px,#3a2c28 -2.1px,#2b2221 14.2px,#272020 25.9px,#2c2323 39.9px,#382c2a 54.0px,#45372f 84.3px)"></div>
<div style="left:201px;top:973px;width:72px;height:5px;background:linear-gradient(90deg,#514a44 -81.2px,#473a30 -22.0px,#392c28 -3.1px,#2b2220 13.4px,#272020 25.3px,#2c2323 39.5px,#382c2a 53.7px,#45372f 84.4px)"></div>
<div style="left:201px;top:978px;width:72px;height:5px;background:linear-gradient(90deg,#514a44 -83.1px,#473a30 -23.3px,#392c28 -4.1px,#2b2220 12.7px,#272020 24.6px,#2c2223 39.0px,#382c2a 53.4px,#45372f 84.5px)"></div>
<div style="left:201px;top:983px;width:72px;height:5px;background:linear-gradient(90deg,#514a44 -85.0px,#473a30 -24.5px,#392c27 -5.1px,#2b2220 11.9px,#262020 24.0px,#2c2222 38.5px,#382b2a 53.1px,#45372f 84.6px)"></div>
<div style="left:201px;top:988px;width:72px;height:5px;background:linear-gradient(90deg,#514a44 -87.0px,#463930 -25.7px,#392c27 -6.1px,#2b2120 11.1px,#262020 23.3px,#2b2222 38.1px,#382b2a 52.8px,#45372f 84.6px)"></div>
<div style="left:201px;top:993px;width:72px;height:5px;background:linear-gradient(90deg,#514a44 -88.9px,#46392f -26.9px,#382b27 -7.1px,#2a2120 10.3px,#262020 22.7px,#2b2222 37.6px,#382b2a 52.5px,#45372f 84.7px)"></div>
<div style="left:201px;top:998px;width:72px;height:5px;background:linear-gradient(90deg,#514a44 -90.8px,#46392f -28.1px,#382b27 -8.0px,#2a2120 9.5px,#262020 22.1px,#2b2222 37.1px,#372b2a 52.2px,#45372f 84.8px)"></div>
<div style="left:201px;top:1003px;width:72px;height:5px;background:linear-gradient(90deg,#514a44 -92.8px,#46392f -29.3px,#382b27 -9.0px,#2a2120 8.7px,#262020 21.4px,#2b2222 36.6px,#372b2a 51.9px,#45372f 84.8px)"></div>
<div style="left:201px;top:1008px;width:72px;height:6px;background:linear-gradient(90deg,#514a44 -94.7px,#46392f -30.5px,#382b27 -10.0px,#2a2120 7.9px,#262020 20.8px,#2b2222 36.2px,#372b2a 51.6px,#45372f 84.9px)"></div>
<div style="left:201px;top:1014px;width:72px;height:2px;background:linear-gradient(90deg,#514a44 -97.0px,#46392f -32.0px,#382b27 -11.2px,#2a2120 7.0px,#262020 20.0px,#2b2222 35.6px,#372b2a 51.2px,#45372f 85.0px)"></div>
<div style="left:201px;top:430px;width:72px;height:90px;background:radial-gradient(ellipse 70px 38px at 60% 50%,rgba(40,26,22,0.55),rgba(40,26,22,0.3) 55%,rgba(40,26,22,0) 100%)"></div>
<div style="left:201px;top:525px;width:72px;height:50px;background:radial-gradient(ellipse 40px 22px at 85% 50%,rgba(35,24,22,0.5),rgba(35,24,22,0) 100%)"></div>
<div style="left:272px;top:143px;width:824px;height:47px;background:#3d3d3d;border-top:1px solid #4a4a4a;border-bottom:1px solid #2a2a2a"></div>
<div style="left:272px;top:143px;width:1px;height:873px;background:#2a2421"></div>
<div style="left:273px;top:190px;width:822px;height:826px;background:#fff"></div>
<div style="left:279px;top:149px;width:36px;height:34px;background:transparent;border:1px solid #2b2b2b;border-radius:5px"></div>
<svg style="left:289px;top:160px;" width="17" height="13" viewBox="0 0 17 13"><path d="M0.500 11.500h2v-8a2 2 0 0 1 2-2h8a2 2 0 0 1 2 2v8h2" fill="none" stroke="#a0a0a0" stroke-width="1.100"/><path d="M6 7.500h5M8.500 5v5" stroke="#a0a0a0" stroke-width="1.100"/></svg>
<div class="t" style="left:570px;top:156.32px;font-size:14.4px;line-height:1.4em;font-weight:bold;color:#9e9e9e;letter-spacing:0.19px">maria@ubuntu: ~/c215/20220728</div>
<div style="left:885px;top:149px;width:36px;height:34px;background:transparent;border:1px solid #2b2b2b;border-radius:5px"></div>
<svg style="left:895px;top:158px;" width="16" height="16" viewBox="0 0 16 16"><circle cx="6.700" cy="6.700" r="5.600" fill="none" stroke="#b2b2b2" stroke-width="1.200"/><path d="M10.800 10.800l4 4" stroke="#b2b2b2" stroke-width="1.800"/></svg>
<div style="left:927px;top:149px;width:36px;height:34px;background:transparent;border:1px solid #2b2b2b;border-radius:5px"></div>
<svg style="left:939px;top:160px;" width="12" height="11" viewBox="0 0 12 11"><path d="M1 1.500h10M1 5.500h10M1 9.500h10" stroke="#c4c4c4" stroke-width="1" shape-rendering="crispEdges"/></svg>
<svg style="left:989px;top:168px;" width="9" height="2" viewBox="0 0 9 2"><path d="M0 1h8.500" stroke="#b8b8b8" stroke-width="1.200"/></svg>
<svg style="left:1029px;top:162px;" width="9" height="9" viewBox="0 0 9 9"><rect x="0.6" y="0.6" width="7.600" height="7.400" fill="none" stroke="#b8b8b8" stroke-width="1.200"/></svg>
<svg style="left:1063px;top:156px;" width="20" height="20" viewBox="0 0 20 20"><circle cx="10" cy="10" r="10" fill="#5c5c5c"/><path d="M6.200 6.200l7.600 7.600M13.800 6.200l-7.600 7.600" stroke="#fff" stroke-width="1.600"/></svg>
<div style="left:1074px;top:143px;width:21px;height:873px;background:linear-gradient(90deg,rgba(0,0,0,0) 0%,rgba(0,0,0,0.03) 35%,rgba(0,0,0,0.1) 65%,rgba(0,0,0,0.22) 88%,rgba(0,0,0,0.17) 100%)"></div>
<div style="left:1095px;top:143px;width:824px;height:47px;background:#2d2d2d;border-top:1px solid #3a3a3a;border-bottom:1px solid #1c1c1c"></div>
<div style="left:1095px;top:143px;width:1px;height:47px;background:#1e1e1e"></div>
<div style="left:1095px;top:190px;width:1px;height:826px;background:#303030"></div>
<div style="left:1096px;top:190px;width:823px;height:826px;background:#fff"></div>
<div style="left:1103px;top:150px;width:35px;height:32px;background:#474747;border:1px solid #474747;border-radius:5px"></div>
<svg style="left:1112px;top:160px;" width="17" height="13" viewBox="0 0 17 13"><path d="M0.500 11.500h2v-8a2 2 0 0 1 2-2h8a2 2 0 0 1 2 2v8h2" fill="none" stroke="#fff" stroke-width="1.100"/><path d="M6 7.500h5M8.500 5v5" stroke="#fff" stroke-width="1.100"/></svg>
<div class="t" style="left:1393px;top:156.32px;font-size:14.4px;line-height:1.4em;font-weight:bold;color:#fff;letter-spacing:0.19px">maria@ubuntu: ~/c215/20220728</div>
<div style="left:1709px;top:150px;width:34px;height:32.5px;background:#454545;border:1px solid #454545;border-radius:5px"></div>
<svg style="left:1718px;top:158px;" width="16" height="16" viewBox="0 0 16 16"><circle cx="6.700" cy="6.700" r="5.600" fill="none" stroke="#fff" stroke-width="1.200"/><path d="M10.800 10.800l4 4" stroke="#fff" stroke-width="1.800"/></svg>
<div style="left:1751px;top:150px;width:34px;height:32.5px;background:#454545;border:1px solid #454545;border-radius:5px"></div>
<svg style="left:1762px;top:160px;" width="12" height="11" viewBox="0 0 12 11"><path d="M1 1.500h10M1 5.500h10M1 9.500h10" stroke="#fff" stroke-width="1" shape-rendering="crispEdges"/></svg>
<svg style="left:1812px;top:167.5px;" width="9" height="2" viewBox="0 0 9 2"><path d="M0 1h8.500" stroke="#fff" stroke-width="1.300"/></svg>
<svg style="left:1851px;top:162px;" width="9" height="9" viewBox="0 0 9 9"><rect x="0.65" y="0.65" width="7.700" height="7.500" fill="none" stroke="#fff" stroke-width="1.300"/></svg>
<svg style="left:1886px;top:156px;" width="20" height="20" viewBox="0 0 20 20"><circle cx="10" cy="10" r="10" fill="#e0491a"/><path d="M6.200 6.200l7.600 7.600M13.800 6.200l-7.600 7.600" stroke="#fff" stroke-width="1.600"/></svg>
<div style="left:1910px;top:193px;width:6px;height:820px;background:#b2b2b2;border-radius:3px"></div>
<div class="term" style="left:274px;top:193.15px"><p style="top:0px"><b class="g">maria@ubuntu</b><b>:</b><b class="b">~/c215/20220728</b>$ ls</p><p style="top:26px"><b class="g">lic</b>  lic.c  <b class="g">ser</b>  ser.c</p><p style="top:52px"><b class="g">maria@ubuntu</b><b>:</b><b class="b">~/c215/20220728</b>$ ./ser</p><p style="top:78px">recv(c=4,n=5)=hello</p><p style="top:104px">recv(c=4,n=9)=<span class="k">何小柒</span></p><p style="top:130px">recv(c=4,n=48)=<span class="k">早知如此，宁愿菡萏之花从未开过！</span></p><p style="top:156px">recv(c=4,n=12)=<span class="k">干饭了！</span></p></div>
<div class="term" style="left:1097px;top:193.15px"><p style="top:0px"><b class="g">maria@ubuntu</b><b>:</b><b class="b">~</b>$ cd c215</p><p style="top:26px"><b class="g">maria@ubuntu</b><b>:</b><b class="b">~/c215</b>$ cd 20220728</p><p style="top:52px"><b class="g">maria@ubuntu</b><b>:</b><b class="b">~/c215/20220728</b>$ ls</p><p style="top:78px"><b class="g">lic</b>  lic.c  <b class="g">ser</b>  ser.c</p><p style="top:104px"><b class="g">maria@ubuntu</b><b>:</b><b class="b">~/c215/20220728</b>$ ./lic</p><p style="top:130px">input</p><p style="top:156px">hello</p><p style="top:182px">buff=ok</p><p style="top:208px"><b class="g">maria@ubuntu</b><b>:</b><b class="b">~/c215/20220728</b>$ ./lic</p><p style="top:234px">input</p><p style="top:260px"><span class="k">何小柒</span></p><p style="top:286px">buff=ok</p><p style="top:312px"><b class="g">maria@ubuntu</b><b>:</b><b class="b">~/c215/20220728</b>$ ./lic</p><p style="top:338px">input</p><p style="top:364px"><span class="k">早知如此，宁愿菡萏之花从未开过！</span></p><p style="top:390px">buff=ok</p><p style="top:416px"><b class="g">maria@ubuntu</b><b>:</b><b class="b">~/c215/20220728</b>$ ./lic</p><p style="top:442px">input</p><p style="top:468px"><span class="k">干饭了！</span></p><p style="top:494px">buff=ok</p><p style="top:520px"><b class="g">maria@ubuntu</b><b>:</b><b class="b">~/c215/20220728</b>$ </p></div>
<div style="left:273px;top:372px;width:14px;height:28px;border:1px solid #000"></div>
<div style="left:1457px;top:711px;width:12px;height:26px;background:#000"></div>
<svg width="0" height="0" style="position:absolute"><defs>
<linearGradient id="ffg" x1="0.6" y1="0" x2="0.35" y2="1"><stop offset="0" stop-color="#ffd43a"/><stop offset="0.25" stop-color="#ffa52e"/><stop offset="0.5" stop-color="#ff7a2e"/><stop offset="0.75" stop-color="#ff3f45"/><stop offset="0.92" stop-color="#ee1a78"/><stop offset="1" stop-color="#e0108a"/></linearGradient>
<radialGradient id="ffp" cx="0.55" cy="0.45" r="0.6"><stop offset="0" stop-color="#8a5cff"/><stop offset="0.7" stop-color="#7b3be0"/><stop offset="1" stop-color="#5a3ccc"/></radialGradient><linearGradient id="ffy" x1="0.4" y1="0" x2="0.6" y2="1"><stop offset="0" stop-color="#fff550"/><stop offset="0.35" stop-color="#ffe340"/><stop offset="0.7" stop-color="#ffb23a"/><stop offset="1" stop-color="#ff8a3a" stop-opacity="0.6"/></linearGradient><linearGradient id="ffa" x1="0" y1="0" x2="1" y2="0.3"><stop offset="0" stop-color="#ffbd2e"/><stop offset="1" stop-color="#ff9a1e"/></linearGradient><linearGradient id="tbw" x1="0.2" y1="0" x2="0.8" y2="1"><stop offset="0" stop-color="#2a73d6"/><stop offset="0.6" stop-color="#2a62c4"/><stop offset="1" stop-color="#3a3aa6"/></linearGradient><linearGradient id="tbh" x1="0" y1="0.2" x2="1" y2="0.6"><stop offset="0" stop-color="#43aeec"/><stop offset="0.5" stop-color="#2a84de"/><stop offset="1" stop-color="#2566cc"/></linearGradient>
<linearGradient id="tbg" x1="0.2" y1="0" x2="0.6" y2="1"><stop offset="0" stop-color="#2a78d8"/><stop offset="0.5" stop-color="#2259c0"/><stop offset="1" stop-color="#2a3aa0"/></linearGradient>
<linearGradient id="hlp" x1="0" y1="0" x2="0" y2="1"><stop offset="0" stop-color="#2383d6"/><stop offset="0.5" stop-color="#2f8fdc"/><stop offset="0.5" stop-color="#3d9ce2"/><stop offset="1" stop-color="#3f9fe4"/></linearGradient>
<linearGradient id="swg" x1="0" y1="0" x2="0" y2="1"><stop offset="0" stop-color="#f05e25"/><stop offset="0.5" stop-color="#f06a33"/><stop offset="0.5" stop-color="#f27a48"/><stop offset="1" stop-color="#f27a48"/></linearGradient>
</defs></svg>
<svg style="left:213px;top:153px;" width="48" height="49" viewBox="0 0 48 49"><path d="M30.700 1.700C33 5 38 9 41.200 11.700 41.500 11 41.800 10.500 42 10 45 14 47 20 46.500 27 46 39 36 48 24 48 11 48 1.500 39 1.500 27 1.500 19 5 13 10.400 9.200 10.200 11 10.800 13 11.800 14.200 13 12.500 14.500 11.500 16.500 10.800 16.500 13 17 15 17.900 16.700 19.500 15 21 14.200 22.900 13.900 22.500 9 26 4 30.700 1.700Z" fill="url(#ffg)"/><path d="M30.700 1.700C33 5 38 9 41.200 11.700 41.500 11 41.800 10.500 42 10 45 14 47 20 46.500 27 46 34 42 41 36 44.500 41 38 42.500 30 40 23 37.500 15.500 30 12 22.900 13.900 22.500 9 26 4 30.700 1.700Z" fill="url(#ffy)"/><circle cx="24" cy="25.300" r="9.300" fill="url(#ffp)"/><path d="M24 16c3.500 0 7 1 9.500 3-2-0.500-3.500-0.300-4.500 0.500 1.500 1 3 3 3.500 5.500-1-3-4-6-8.500-9z" fill="#b833e1"/><path d="M7.500 21.500C11 18.500 17 18.700 24.500 21.200 22 24.500 19 26 16 25.800 12.500 25.500 10 24 7.500 21.500Z" fill="url(#ffa)"/><path d="M16 25.800c-2.500 1.500-3 5-1 8-3-2-4.500-5-4-8.500 1.500 0.500 3.500 0.700 5 0.500z" fill="#ff8a25"/></svg>
<svg style="left:212px;top:222px;" width="50" height="50" viewBox="0 0 50 50"><path d="M5 38A24 24 0 1 1 30 48.500L26 47.600C30 45 33 43 35 40L31 43.300 5 34Z" fill="url(#tbg)"/><path d="M5.500 35.500L13.300 44 14.500 39.500 18.500 41.500 17 37.500Z" fill="#1d1a72"/><path d="M8 15.500L33.300 18.300 36 30.500 31 43.300 5 33.900 3.900 26.700Z" fill="#fafafa"/><path d="M5 33.900L31 43.300" stroke="#cfcfcf" stroke-width="1" fill="none"/><path d="M8 15.500L16.700 30.300 33.900 23.900" fill="none" stroke="#b2b2b2" stroke-width="0.800"/><path d="M30 14L45 18 47 34 40 44 31 48 26 47.600 33 44.500 31.500 42 35.500 40 33 37.500 37 34.500 34.200 32 36.800 29 34 26.500 36 23 33.500 20.500Z" fill="#2f9ce4"/><path d="M27 9C38 7 48 14 49 25 49 36 42 45 32 48.500 38 44 40 40 39.500 36L41.500 31 39.800 32 41 26 38.500 28 38 21 36 24 33.500 17 32 19.500C30 15 27 13 22 13Z" fill="url(#tbw)"/><path d="M10 18C9 10 14 2 20.500 0.800 28 1 36 4 40 10 33 8 24 9 20 14 17 17 14 19 11.500 20.500Z" fill="url(#tbh)"/><path d="M9.500 17.500L12.300 22 15 18.500Z" fill="#8fd8ea"/><circle cx="14.400" cy="15" r="1.500" fill="#c96a1a"/><circle cx="14.400" cy="15" r="0.900" fill="#2a1808"/></svg>
<svg style="left:214.5px;top:292.5px;" width="45" height="45" viewBox="0 0 45 45"><rect x="0" y="0" width="45" height="45" rx="6.500" fill="#a69e8c"/><path d="M0 38.500v-32A6.500 6.500 0 0 1 6.500 0H38.500A6.500 6.500 0 0 1 45 6.500L8 40z" fill="#b4ac9b" opacity="0.55"/><path d="M6 11.500a2.500 2.500 0 0 1 2.500-2.500h10l3 3h15a2.500 2.500 0 0 1 2.500 2.500v20a2.500 2.500 0 0 1-2.500 2.500h-28a2.500 2.500 0 0 1-2.500-2.500z" fill="#e4dfd6"/><rect x="6" y="12" width="33" height="25" rx="2.500" fill="#faf9f8"/></svg>
<svg style="left:219px;top:360.5px;" width="36" height="45" viewBox="0 0 36 45"><rect x="0" y="0" width="36" height="45" rx="4" fill="#ebe7de"/><rect x="0" y="38" width="36" height="7" rx="3.500" fill="#d9d4c8"/><circle cx="18" cy="22.500" r="16" fill="#2a2730"/><circle cx="18" cy="22.500" r="14.300" fill="#3a3742"/><circle cx="18" cy="22.500" r="11.600" fill="#f5c01c"/><circle cx="18" cy="22.500" r="9" fill="#eaae0e"/><circle cx="18" cy="22.500" r="4.800" fill="#1d1b20"/><circle cx="18" cy="22.500" r="3" fill="#2c2a30"/></svg>
<svg style="left:219px;top:428.5px;" width="36" height="45" viewBox="0 0 36 45"><path d="M3 0.800H25.500L35.200 10.500V41.500a2.800 2.800 0 0 1-2.800 2.800H3.600A2.800 2.800 0 0 1 0.800 41.500V3.600A2.800 2.800 0 0 1 3 0.800z" fill="#fbfbfb" stroke="#1c7bb8" stroke-width="2.200"/><path d="M0.800 22.500h34.400V41.500a2.800 2.800 0 0 1-2.800 2.800H3.600A2.800 2.800 0 0 1 0.800 41.500z" fill="#e9eef2" opacity="0.6"/><path d="M26 0h7.200A2.800 2.800 0 0 1 36 2.800V10z" fill="#155f92"/><g fill="#1c7bb8"><rect x="6" y="16" width="8" height="2"/><rect x="6" y="20" width="8" height="2"/><rect x="6" y="24" width="8" height="2"/><rect x="6" y="28.500" width="24" height="2"/><rect x="6" y="32.500" width="24" height="2"/><rect x="6" y="36.500" width="17" height="2"/></g><rect x="16.500" y="15.500" width="13.500" height="10.500" fill="#9fc6e0" stroke="#1c7bb8" stroke-width="1"/><path d="M17.500 25.500l4-6 3 4 2-2.500 3 4.500z" fill="#555"/><rect x="26.500" y="16.500" width="2.800" height="2.800" fill="#f2b800"/></svg>
<svg style="left:214.5px;top:494px;" width="45" height="44" viewBox="0 0 45 44"><path d="M14.500 10V8.500a8 8 0 0 1 16 0V10" fill="none" stroke="#f3d9a4" stroke-width="2"/><rect x="0" y="6.500" width="45" height="37" rx="4.500" fill="url(#swg)"/><rect x="0" y="41" width="45" height="2.500" rx="1.200" fill="#c9501f" opacity="0.6"/><path d="M10.500 36.500L20 13.500h5L34.500 36.500h-4.800L22.500 18.500 15.300 36.500z" fill="#fff"/><rect x="8" y="27.300" width="29" height="4.400" rx="2.200" fill="#fff"/><rect x="10" y="28.300" width="25" height="2.200" fill="#f5c4ae"/></svg>
<svg style="left:214.5px;top:564.5px;" width="45" height="45" viewBox="0 0 45 45"><circle cx="22.500" cy="22.500" r="22.300" fill="url(#hlp)"/><path d="M16.500 15.500c1-4 4-5.500 7-5.500 4 0 7 2.500 7 6.300 0 3.200-2 4.700-4 6.200-2 1.500-2.800 2.800-2.800 5.500" fill="none" stroke="#fff" stroke-width="2.600" stroke-linecap="round"/><circle cx="23.600" cy="33.500" r="2.200" fill="#fff"/></svg>
<div style="left:205px;top:623px;width:64px;height:64px;background:rgba(255,255,255,0.13);border-radius:5px"></div>
<svg style="left:214px;top:636px;" width="45" height="37" viewBox="0 0 45 37"><rect x="0.600" y="0.600" width="43.800" height="35.800" rx="4.500" fill="#3b3b3b" stroke="#555" stroke-width="1.200"/><path d="M1 31v1a4 4 0 0 0 4 4h35a4 4 0 0 0 4-4v-1" fill="none" stroke="#2a2a2a" stroke-width="1.500"/><path d="M7 8l6 3-6 3" fill="none" stroke="#fff" stroke-width="1.500"/><path d="M14.500 16h6.500" stroke="#fff" stroke-width="1.500"/></svg>
<svg style="left:205px;top:647px;" width="6" height="15" viewBox="0 0 6 15"><circle cx="3" cy="3" r="2.600" fill="#e95420"/><circle cx="3" cy="12" r="2.600" fill="#e95420"/></svg>
<svg style="left:222px;top:967px;" width="31" height="31" viewBox="0 0 31 31"><rect x="0" y="0" width="6.200" height="6.200" rx="1.500" fill="#f4f0ec"/><rect x="0" y="12" width="6.200" height="6.200" rx="1.500" fill="#f4f0ec"/><rect x="0" y="24" width="6.200" height="6.200" rx="1.500" fill="#f4f0ec"/><rect x="12" y="0" width="6.200" height="6.200" rx="1.500" fill="#f4f0ec"/><rect x="12" y="12" width="6.200" height="6.200" rx="1.500" fill="#f4f0ec"/><rect x="12" y="24" width="6.200" height="6.200" rx="1.500" fill="#f4f0ec"/><rect x="24" y="0" width="6.200" height="6.200" rx="1.500" fill="#f4f0ec"/><rect x="24" y="12" width="6.200" height="6.200" rx="1.500" fill="#f4f0ec"/><rect x="24" y="24" width="6.200" height="6.200" rx="1.500" fill="#f4f0ec"/></svg>
<div style="left:0px;top:1017px;width:1920px;height:25px;background:#e4e5e6"></div>
<div class="t" style="left:1px;top:1019.50px;font-size:15px;line-height:1.4em;">要将输入定向到该虚拟机，请将鼠标指针移入其中或按<span style="margin-left:4.5px;letter-spacing:0.65px">Ctrl+G</span>。</div>
<svg style="left:1687px;top:1022px;" width="21" height="17" viewBox="0 0 21 17"><path d="M4 1.200h12.500l3.500 10.500v3.600H0.800v-3.600z" fill="none" stroke="#9a9a9a" stroke-width="1.400"/><path d="M1 11.500h18.500" stroke="#9a9a9a" stroke-width="1.400"/><circle cx="16" cy="13" r="3.200" fill="#76c81c"/></svg>
<svg style="left:1713px;top:1021px;" width="18" height="18" viewBox="0 0 18 18"><circle cx="9" cy="9" r="8.300" fill="none" stroke="#c4c4c4" stroke-width="1"/><circle cx="9" cy="9" r="1.800" fill="none" stroke="#c4c4c4" stroke-width="1"/><path d="M3.500 7a6 6 0 0 1 3-3.500M14.500 11a6 6 0 0 1-3 3.500" stroke="#c4c4c4" fill="none"/></svg>
<svg style="left:1737.5px;top:1021px;" width="19" height="18" viewBox="0 0 19 18"><g fill="none" stroke="#9a9a9a" stroke-width="1.300"><rect x="1" y="1" width="10" height="7.500"/><rect x="8" y="6" width="10" height="7.500" fill="#e4e5e6"/><path d="M4 10v-1.500M11 13.500v2"/></g><path d="M1 11v6h9" fill="none" stroke="#9a9a9a" stroke-width="1.200" stroke-dasharray="1.200 1.200"/><circle cx="15.500" cy="14" r="3.200" fill="#76c81c"/></svg>
<svg style="left:1763px;top:1022px;" width="18" height="17" viewBox="0 0 18 17"><g fill="none" stroke="#c4c4c4" stroke-width="1.300"><rect x="4.500" y="0.800" width="9" height="5"/><rect x="0.800" y="5.800" width="16.400" height="7" rx="1.500"/><rect x="4.500" y="10.500" width="9" height="5.500" fill="#e4e5e6"/></g></svg>
<svg style="left:1789px;top:1022px;" width="18" height="17" viewBox="0 0 18 17"><path d="M1 5.500h3.200l4.600-4v13.500l-4.600-4H1z" fill="none" stroke="#9a9a9a" stroke-width="1.400"/><path d="M11.500 4a5 5 0 0 1 1.500 4M13.500 2a8 8 0 0 1 2 6" fill="none" stroke="#9a9a9a" stroke-width="1.100"/><circle cx="13.500" cy="13.300" r="3.200" fill="#76c81c"/></svg>
<svg style="left:1814px;top:1022px;" width="16" height="17" viewBox="0 0 16 17"><circle cx="7.500" cy="7.500" r="6.800" fill="none" stroke="#c4c4c4" stroke-width="1"/><circle cx="7.500" cy="7.500" r="3.500" fill="none" stroke="#c4c4c4" stroke-width="1"/><path d="M3.500 15.500h8" stroke="#c4c4c4" stroke-width="1.200"/></svg>
<svg style="left:1838px;top:1021px;" width="18" height="18" viewBox="0 0 18 18"><rect x="3.800" y="0.800" width="10.400" height="8" fill="none" stroke="#c4c4c4" stroke-width="1.200"/><rect x="6.200" y="3.500" width="1.800" height="1.500" fill="#c4c4c4"/><rect x="10" y="3.500" width="1.800" height="1.500" fill="#c4c4c4"/><path d="M0 17.500v-6a3 3 0 0 1 3-3h12a3 3 0 0 1 3 3v6z" fill="#b9b9b9"/></svg>
<div style="left:1864px;top:1020px;width:1px;height:21px;background:#9c9c9c"></div>
<svg style="left:1875px;top:1021px;" width="18" height="18" viewBox="0 0 18 18"><path d="M0.800 0.800h16.400v11.500l-5 5H0.800z" fill="#3adfcc" stroke="#8a8a8a" stroke-width="1.200"/><path d="M17.200 12.300h-5v5z" fill="#7aeadd" stroke="#8a8a8a" stroke-width="1"/></svg>
<div style="left:0px;top:1041px;width:1920px;height:1px;background:#7b7b7c"></div>
<div style="left:0px;top:1042px;width:1920px;height:38px;background:#101010"></div>
<div style="left:237px;top:1077px;width:175px;height:3px;background:#76b9ed"></div>
<div style="left:603px;top:1077px;width:175px;height:3px;background:#76b9ed"></div>
<div style="left:1014px;top:1077px;width:175px;height:3px;background:#76b9ed"></div>
<svg style="left:11.5px;top:1051px;" width="21" height="21" viewBox="0 0 21 21"><path d="M0 3.200L8.500 2v8.200H0zM9.700 1.800L21 0v10.200H9.700zM0 11.300h8.500v8.300L0 18.400zM9.700 11.300H21v10.200L9.700 19.800z" fill="#fff"/></svg>
<svg style="left:56px;top:1050px;" width="22" height="22" viewBox="0 0 22 22"><circle cx="13.500" cy="8" r="6.700" fill="none" stroke="#fff" stroke-width="1.400"/><path d="M9 13l-8 8.500" stroke="#fff" stroke-width="1.600"/></svg>
<svg style="left:106px;top:1050px;" width="20" height="22" viewBox="0 0 20 22"><path d="M5.500 4V3.200a1.700 1.700 0 0 1 1.700-1.700h5.600a1.700 1.700 0 0 1 1.700 1.700V4" fill="none" stroke="#3aa0e8" stroke-width="1"/><rect x="0" y="3" width="19.500" height="18.200" rx="2.500" fill="#f4f4f4"/><rect x="5" y="7.500" width="4.300" height="4.300" fill="#f25022"/><rect x="10.200" y="7.500" width="4.300" height="4.300" fill="#7fba00"/><rect x="5" y="12.700" width="4.300" height="4.300" fill="#00a4ef"/><rect x="10.200" y="12.700" width="4.300" height="4.300" fill="#ffb900"/></svg>
<svg style="left:153px;top:1052px;" width="19" height="17" viewBox="0 0 19 17"><path d="M0 1.500A1.500 1.500 0 0 1 1.500 0h5l2 2H17.500A1.500 1.500 0 0 1 19 3.500V6H0z" fill="#e9a825"/><rect x="0" y="3.500" width="19" height="12" rx="1" fill="#fcd35a"/><path d="M3.500 15.500V9.500h12v6h-3v-3.500h-6v3.500z" fill="#3b8fe0"/><rect x="0" y="14.800" width="19" height="1" fill="#e0a52a"/></svg>
<svg style="left:198px;top:1051px;" width="21" height="21" viewBox="0 0 21 21"><defs><linearGradient id="edg" x1="0" y1="0.3" x2="1" y2="0.4"><stop offset="0" stop-color="#2a9fe0"/><stop offset="0.5" stop-color="#35c1a4"/><stop offset="1" stop-color="#72da62"/></linearGradient><linearGradient id="edb" x1="0" y1="0" x2="0.6" y2="1"><stop offset="0" stop-color="#2392e6"/><stop offset="1" stop-color="#0d57a8"/></linearGradient></defs><circle cx="10.500" cy="10.500" r="10" fill="url(#edg)"/><path d="M0.500 10.500A10 10 0 0 0 17.500 17.700C14.500 19.500 9.800 18 9.300 13.500 9 10.500 11 8.200 13.200 8.200 9.500 4.800 2 6 0.500 10.500Z" fill="url(#edb)"/><path d="M13.200 8.200C11.200 9 10.300 11.500 11.600 13.400 13.200 15.600 17.200 15.500 19.900 13.600 20.300 12.600 20.500 11.700 20.500 10.900L13.700 10.900C13.900 9.900 13.700 8.900 13.200 8.200Z" fill="#101010"/><path d="M9.300 13.500C9.800 18 14.500 19.500 17.500 17.700 19 16.500 19.700 15 19.900 13.600 17.200 15.500 13.200 15.600 11.600 13.400 10.600 12 10.800 10 12 9 10.300 9.500 9 11.300 9.300 13.500Z" fill="#114a8b"/></svg>
<svg style="left:243px;top:1051.5px;" width="19" height="19" viewBox="0 0 19 19"><path d="M9.500 9.500L1.450 4.850A9.300 9.300 0 0 1 17.550 4.850Z" fill="#e94235"/><path d="M9.500 9.500L17.550 4.850A9.300 9.300 0 0 1 9.500 18.800Z" fill="#fbc116"/><path d="M9.500 9.500L9.500 18.800A9.300 9.300 0 0 1 1.450 4.850Z" fill="#31a452"/><path d="M9.500 5.200H17.300A9.300 9.300 0 0 1 17.550 4.850L9.500 4.850Z" fill="#e94235"/><circle cx="9.500" cy="9.500" r="4.500" fill="#fff"/><circle cx="9.500" cy="9.500" r="3.600" fill="#4285f4"/></svg>
<div class="t" style="left:266px;top:1051.20px;font-size:15px;line-height:1.4em;color:#fff;">腾讯云<span style="letter-spacing:0.3px"> - Search - ...</span></div>
<svg style="left:430px;top:1051px;" width="20" height="20" viewBox="0 0 20 20"><circle cx="10" cy="10" r="10" fill="#fcd803"/><path d="M9.500 2.800L15.800 0.800C15.500 2.500 14.500 4 12.800 5L12.800 13.800A4.200 4.200 0 1 1 9.500 9.700Z" fill="#1ec27a"/><path d="M12.800 5C14.500 4 15.500 2.500 15.800 0.800L17 3C16 4.500 14.500 5.200 12.800 5.500Z" fill="#17a8a0"/></svg>
<svg style="left:475px;top:1051px;" width="20" height="20" viewBox="0 0 20 20"><rect width="20" height="20" rx="3.500" fill="#dd001b"/><path d="M13.500 3.800C12 3.200 10.300 4 10.300 5.800 10.300 7 10.800 8.200 11.200 9.500M11 7.500C14 7.500 16 9.500 16 12 16 14.800 13.500 16.600 10.500 16.600 7.300 16.600 4.500 14.500 4.500 11.300 4.500 8.800 6.300 7 8.800 6.500" fill="none" stroke="#fff" stroke-width="1.700" stroke-linecap="round"/><circle cx="10.300" cy="11.600" r="2.200" fill="none" stroke="#fff" stroke-width="1.500"/></svg>
<svg style="left:522px;top:1051px;" width="16" height="20" viewBox="0 0 16 20"><ellipse cx="8" cy="10" rx="6.300" ry="9" fill="#1a1a1a"/><ellipse cx="8" cy="13.500" rx="4.300" ry="5.500" fill="#fff"/><path d="M2 9.500c2 1.500 10 1.500 12 0l0.300 2.200c-2 1.800-10.600 1.800-12.600 0z" fill="#e8252a"/><ellipse cx="6.300" cy="5" rx="1.100" ry="1.600" fill="#fff"/><ellipse cx="9.700" cy="5" rx="1.100" ry="1.600" fill="#fff"/><ellipse cx="8" cy="7.700" rx="2.300" ry="0.900" fill="#f6a800"/><ellipse cx="4.500" cy="19" rx="3" ry="1" fill="#f6a800"/><ellipse cx="11.500" cy="19" rx="3" ry="1" fill="#f6a800"/></svg>
<svg style="left:565px;top:1052px;" width="21" height="18" viewBox="0 0 21 18"><ellipse cx="8" cy="6.500" rx="8" ry="6.500" fill="#2dc653"/><path d="M3 11l-1 3.500 4-2z" fill="#2dc653"/><ellipse cx="14.500" cy="11.500" rx="6.300" ry="5.300" fill="#e9e9e9"/><path d="M17.500 15.500l1.500 2.500-4-1z" fill="#e9e9e9"/><circle cx="5.300" cy="4.800" r="0.900" fill="#157a32"/><circle cx="10.500" cy="4.800" r="0.900" fill="#157a32"/><circle cx="12.500" cy="10" r="0.800" fill="#999"/><circle cx="16.500" cy="10" r="0.800" fill="#999"/></svg>
<svg style="left:608px;top:1053.5px;" width="20" height="16" viewBox="0 0 20 16"><path d="M0 0H20L15 15.500H12.200L10 9 7.800 15.500H5Z" fill="#f4271c"/><path d="M4.300 2.200H8.800L6.600 9.200Z" fill="#101010"/><path d="M11.200 2.200H15.700L13.400 9.200Z" fill="#101010"/><path d="M8.800 2.200L10 6 11.200 2.200Z" fill="#ff7a2e"/><path d="M5 15.500L6.600 9.200 7.800 12.500 7.800 15.500ZM12.200 15.500L13.400 9.200 14.600 12.500 15 15.500Z" fill="#ff6a2a" opacity="0.8"/></svg>
<div class="t" style="left:632.5px;top:1051.20px;font-size:15px;line-height:1.4em;color:#fff;"><span style="letter-spacing:0.5px">Linux</span>平台应用开发<span style="letter-spacing:0.8px">...</span></div>
<svg style="left:796px;top:1051.5px;" width="20" height="19" viewBox="0 0 20 19"><clipPath id="ocW"><rect x="5" y="0" width="15" height="19" rx="1.500"/></clipPath><g clip-path="url(#ocW)"><rect x="5" y="0" width="15" height="4.750" fill="#41a5ee"/><rect x="5" y="4.75" width="15" height="4.750" fill="#2b7cd3"/><rect x="5" y="9.5" width="15" height="4.750" fill="#185abd"/><rect x="5" y="14.25" width="15" height="4.750" fill="#103f91"/></g><rect x="0" y="3.700" width="11.500" height="11.500" rx="1.200" fill="#185abd"/><text x="5.750" y="13.400" font-family="Liberation Sans" font-weight="bold" font-size="11" fill="#fff" text-anchor="middle">W</text></svg>
<svg style="left:841px;top:1051.5px;" width="20" height="19" viewBox="0 0 20 19"><clipPath id="ocX"><rect x="5" y="0" width="15" height="19" rx="1.500"/></clipPath><g clip-path="url(#ocX)"><rect x="5" y="0" width="15" height="4.750" fill="#33c481"/><rect x="5" y="4.75" width="15" height="4.750" fill="#21a366"/><rect x="5" y="9.5" width="15" height="4.750" fill="#107c41"/><rect x="5" y="14.25" width="15" height="4.750" fill="#185c37"/></g><rect x="0" y="3.700" width="11.500" height="11.500" rx="1.200" fill="#107c41"/><text x="5.750" y="13.400" font-family="Liberation Sans" font-weight="bold" font-size="11" fill="#fff" text-anchor="middle">X</text></svg>
<svg style="left:886px;top:1051.5px;" width="20" height="19" viewBox="0 0 20 19"><circle cx="11" cy="9.500" r="9.500" fill="#ed6c47"/><path d="M11 0a9.500 9.500 0 0 1 9.500 9.500H11z" fill="#ff8f6b"/><path d="M1.500 9.500h19a9.500 9.500 0 0 1-19 0z" fill="#d35230" opacity="0.8"/><rect x="0" y="3.700" width="11.500" height="11.500" rx="1.200" fill="#c43e1c"/><text x="5.750" y="13.4" font-family="Liberation Sans" font-weight="bold" font-size="11" fill="#fff" text-anchor="middle">P</text></svg>
<svg style="left:931px;top:1051px;" width="20" height="20" viewBox="0 0 20 20"><path d="M14.500 0.500L20 3v14l-5.500 2.500z" fill="#2eaaf5"/><path d="M14.500 0.500L5 9 1.800 6.500 0 7.500v5l1.800 1L5 11l9.500 8.500v-5L8.500 10l6-4.500z" fill="#0b86d8"/><path d="M0 7.500l1.800-1L14.500 14.500v5z" fill="#0a72bd" opacity="0.7"/></svg>
<svg style="left:976px;top:1051px;" width="20" height="20" viewBox="0 0 20 20"><path d="M14.500 0.500L20 3v14l-5.500 2.500L5 11.500 1.800 14 0 13V7l1.800-1L5 8.500z" fill="#9a5fd6"/><path d="M14.500 0.500L20 3v14l-5.500 2.500z" fill="#b78cf0"/><path d="M14.500 5.800v8.400L9 10z" fill="#101010"/><path d="M2 8.200v3.600L4 10z" fill="#101010"/></svg>
<svg style="left:1019px;top:1051px;" width="21" height="21" viewBox="0 0 21 21"><rect x="1.500" y="6.500" width="12" height="12.500" rx="2.200" fill="none" stroke="#f38b00" stroke-width="3"/><rect x="7" y="1.500" width="12.500" height="12" rx="2.200" fill="none" stroke="#0f96d2" stroke-width="3"/><path d="M1.500 12.500V8.700A2.200 2.200 0 0 1 3.700 6.500H10.600" fill="none" stroke="#f38b00" stroke-width="3"/></svg>
<div class="t" style="left:1044px;top:1050.85px;font-size:15.5px;line-height:1.4em;color:#fff;letter-spacing:0.1px">Ubuntu 64 位 - V...</div>
<svg style="left:1207px;top:1051px;" width="20" height="20" viewBox="0 0 20 20"><circle cx="10" cy="11" r="9" fill="#7fb7e6"/><circle cx="10" cy="11" r="7.500" fill="#b9d8f2"/><path d="M1.500 12c3 2 14 2 17 0" fill="none" stroke="#4a8ac8" stroke-width="1"/><path d="M15 0l-5.500 11" stroke="#d9531e" stroke-width="1.300"/><ellipse cx="10" cy="8" rx="6" ry="3" fill="#e6f1fb" opacity="0.8"/></svg>
<svg style="left:1252px;top:1051px;" width="20" height="20" viewBox="0 0 20 20"><rect width="20" height="20" rx="5" fill="#fff"/><path d="M5.500 4h6a4.500 4.500 0 0 1 0 9H9v-4.500H5.500z" fill="#1f5af0"/><rect x="9" y="10" width="5" height="6" rx="1.500" fill="#a9c4ff"/></svg>
<svg style="left:1297px;top:1051px;" width="21" height="21" viewBox="0 0 21 21"><path d="M1 12c0-5 4-8.500 9.500-8.500 4.500 0 7.500 2.500 7.500 6 0 3-2 3.500-3.500 3.500-1.500 0-2 1-1.500 2.500 0.500 2-1 3.500-4 3.500C4.500 19 1 16.500 1 12z" fill="#a9cbe8"/><circle cx="5" cy="10.500" r="1.500" fill="#e8412e"/><circle cx="8" cy="7" r="1.500" fill="#4caf50"/><circle cx="12" cy="6.300" r="1.500" fill="#f6b820"/><circle cx="6.500" cy="14.500" r="1.600" fill="#333"/><path d="M18 2L9.500 19" stroke="#d88a2d" stroke-width="1.800"/><path d="M18.500 0l1.500 1.500-2 3-1.500-1z" fill="#f2d7a0"/></svg>
<svg style="left:1343px;top:1051.5px;" width="18.5" height="19" viewBox="0 0 18.5 19"><rect width="18.500" height="19" rx="2.500" fill="#0b6cff"/><path d="M2.500 13l4-6 3 3.500 3-4.500 4.500 7h-4l-1.500-2.500-1.500 2.500z" fill="#fff"/><path d="M2.500 13l4-6 1.500 1.800L5.500 13z" fill="#cfe0ff"/></svg>
<svg style="left:1387px;top:1051px;" width="20" height="20" viewBox="0 0 20 20"><path d="M10 1l10 7-10 7L0 8z" fill="#18a0f5"/><path d="M8 5v6l5-3z" fill="#fff"/><path d="M4 12.500l6 4 6-4v3l-6 4-6-4z" fill="#6e5ad6"/></svg>
<svg style="left:1432px;top:1051px;" width="20" height="20" viewBox="0 0 20 20"><circle cx="10" cy="10" r="10" fill="#13294b"/><path d="M0 11l6 2.500a3 3 0 0 1 2.500-0.800l3-4a4 4 0 1 1 4 4l-4 3a3 3 0 0 1-5.800 0.500L0.500 14z" fill="#e6eaf0"/><circle cx="15" cy="8.500" r="2.400" fill="#13294b"/><circle cx="15" cy="8.500" r="1.500" fill="#e6eaf0"/><circle cx="8.500" cy="15.500" r="1.800" fill="#13294b"/></svg>
<svg style="left:1477px;top:1051px;" width="20" height="20" viewBox="0 0 20 20"><rect width="20" height="20" rx="4.500" fill="#fff"/><circle cx="6.500" cy="11.500" r="3" fill="none" stroke="#2d8cf0" stroke-width="1.600"/><circle cx="13.500" cy="11.500" r="3" fill="none" stroke="#2d8cf0" stroke-width="1.600"/><circle cx="10" cy="6.500" r="3" fill="none" stroke="#f04a5a" stroke-width="1.600"/><rect x="6.500" y="18" width="3" height="1.500" fill="#f04a5a"/><rect x="10.500" y="18" width="3" height="1.500" fill="#2d8cf0"/></svg>
<svg style="left:1522px;top:1051px;" width="20" height="20" viewBox="0 0 20 20"><rect width="20" height="20" fill="#2b2e34"/><path d="M6 6.500l8.500 3.500L6 13.500z" fill="#2ec866"/><path d="M6 6.500l3 3.500-3 3.500z" fill="#ff9d1e"/><path d="M8 8.500l4 1.500-4 1.500z" fill="#26a7ff"/></svg>
<svg style="left:1567px;top:1051px;" width="20" height="20" viewBox="0 0 20 20"><rect width="20" height="20" rx="3.500" fill="#1e8ae6"/><text x="10" y="9.500" font-family="Liberation Sans" font-weight="bold" font-size="6" fill="#fff" text-anchor="middle">CNKI</text><rect x="5" y="12" width="10" height="1" fill="#cfe6fb"/><rect x="3" y="15" width="14" height="3" fill="#6fb6f2" opacity="0.7"/></svg>
<div style="left:1603px;top:1042px;width:30px;height:38px;background:#2b2b2b"></div>
<svg style="left:1610px;top:1056.5px;" width="16" height="9" viewBox="0 0 16 9"><path d="M0.500 8.500l7.500-7.500 7.500 7.500" fill="none" stroke="#fff" stroke-width="1.400"/></svg>
<svg style="left:1638px;top:1053.5px;" width="21" height="14" viewBox="0 0 21 14"><rect x="4.500" y="2" width="14.500" height="10" fill="none" stroke="#fff" stroke-width="1.300"/><rect x="19.300" y="5" width="1.500" height="4" fill="#fff"/><path d="M1.500 0.500v3M3.500 0.500v3M0.500 3.500h4v2a2 2 0 0 1-4 0zM2.500 7.500v4h2" fill="none" stroke="#fff" stroke-width="1"/></svg>
<svg style="left:1671px;top:1054px;" width="16" height="16" viewBox="0 0 16 16"><path d="M1 15A14 14 0 0 1 15 1" fill="none" stroke="#fff" stroke-width="1.200"/><path d="M5 15A10 10 0 0 1 15 5" fill="none" stroke="#fff" stroke-width="1.200"/><path d="M9 15a6 6 0 0 1 6-6" fill="none" stroke="#fff" stroke-width="1.200"/><circle cx="13.500" cy="13.500" r="1.700" fill="#fff"/></svg>
<svg style="left:1697px;top:1052px;" width="21" height="19" viewBox="0 0 21 19"><path d="M1 6.500h3l4-4v14l-4-4H1z" fill="none" stroke="#fff" stroke-width="1.300"/><path d="M11 6.500a4 4 0 0 1 0 6" fill="none" stroke="#999" stroke-width="1.100"/><path d="M14 4a8 8 0 0 1 0 11" fill="none" stroke="#888" stroke-width="1.100"/><path d="M17 1.500a12 12 0 0 1 0 16" fill="none" stroke="#777" stroke-width="1.100"/></svg>
<div class="t" style="left:1726px;top:1047.15px;font-size:19.5px;line-height:1.4em;color:#fff;font-weight:bold">英</div>
<div style="left:1764px;top:1052px;width:18.5px;height:18.5px;background:#fff"></div>
<div class="t" style="left:1765px;top:1049.65px;font-size:16.5px;line-height:1.4em;color:#000">拼</div>
<div class="t" style="left:1805.5px;top:1051.10px;font-size:16px;line-height:1.4em;color:#fff;letter-spacing:-0.15px">12:25</div>
<svg style="left:1869px;top:1051px;" width="21" height="20" viewBox="0 0 21 20"><path d="M0.700 0.700h19.600v14.800h-6.800l-3 3.500-3-3.500H0.700z" fill="none" stroke="#fff" stroke-width="1.300"/></svg>
<div style="left:1914px;top:1042px;width:1px;height:38px;background:#5a5a5a"></div>
</body></html>
